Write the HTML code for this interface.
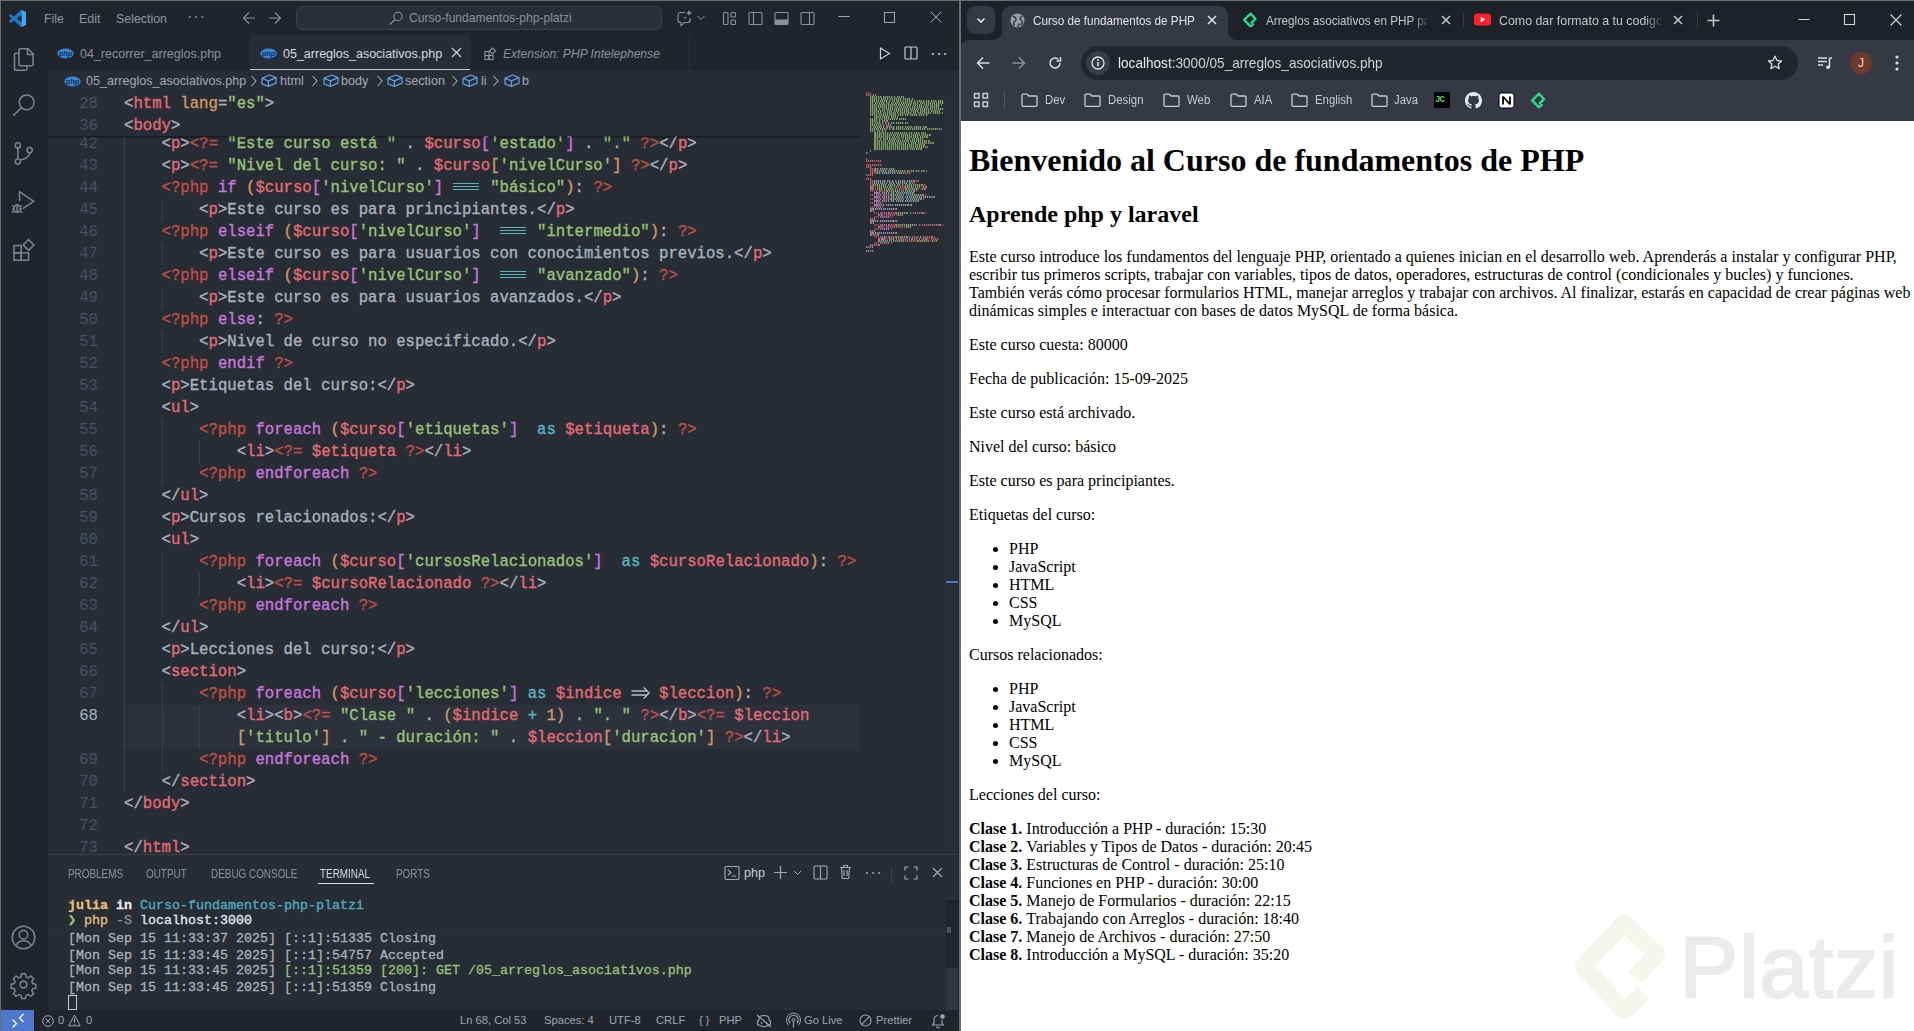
<!DOCTYPE html>
<html><head><meta charset="utf-8">
<style>
*{box-sizing:border-box;margin:0;padding:0}
html,body{width:1914px;height:1031px;overflow:hidden;background:#21252b;font-family:"Liberation Sans",sans-serif}
.a{position:absolute}
svg{position:absolute;overflow:visible}
/* VS Code */
#vs{position:absolute;left:0;top:0;width:960px;height:1031px;background:#21252b;overflow:hidden}
#title{position:absolute;left:0;top:0;width:958px;height:35px;background:#21252b;color:#8f959f;font-size:12.4px}
#title .m{position:absolute;top:11px;line-height:16px}
#act{position:absolute;left:0;top:35px;width:48px;height:975px;background:#21252b}
#tabs{position:absolute;left:48px;top:35px;width:910px;height:35px;background:#21252b;font-size:12.5px}
.tab{position:absolute;top:3px;height:35px;line-height:35px;color:#8b919c;white-space:nowrap}
#crumbs{position:absolute;left:48px;top:70px;width:910px;height:22px;background:#282c34;color:#a3a9b4;font-size:12.6px;white-space:nowrap}
#crumbs .c{position:absolute;top:4px;line-height:16px}
#ed{position:absolute;left:48px;top:92px;width:910px;height:762px;background:#282c34;overflow:hidden}
.cl{position:absolute;left:76px;height:22px;line-height:22px;padding-top:0.8px;white-space:pre;font-family:"Liberation Mono",monospace;font-size:15.65px;color:#abb2bf;-webkit-text-stroke:.35px}
.ln{position:absolute;left:0;width:50px;text-align:right;height:22px;line-height:22px;padding-top:0.8px;font-family:"Liberation Mono",monospace;font-size:15.65px;color:#495162}
.ln.act{color:#abb2bf}
#sticky{position:absolute;left:0;top:0;width:811px;height:44px;background:#282c34}
#sticky:after{content:"";position:absolute;left:0;top:44px;width:811px;height:3px;background:linear-gradient(rgba(0,0,0,.45),rgba(0,0,0,0))}
.ig{position:absolute;width:1px;background:#3b4048}
#panel{position:absolute;left:48px;top:854px;width:910px;height:156px;background:#282c34;border-top:1px solid #3a3f4b}
.pt{position:absolute;top:10px;font-size:12.4px;line-height:15px;color:#8b919c;letter-spacing:0;transform:scaleX(.8);transform-origin:0 0}
.tl{position:absolute;left:20px;white-space:pre;font-family:"Liberation Mono",monospace;font-size:13.33px;line-height:16px;color:#abb2bf;-webkit-text-stroke:.3px}
#status{position:absolute;left:0;top:1010px;width:958px;height:21px;background:#21252b;color:#9da5b4;font-size:11.2px;white-space:nowrap}
#status .s{position:absolute;top:4px;line-height:15px}
/* Chrome */
#cr{position:absolute;left:961px;top:0;width:953px;height:1031px;background:#1e2127;overflow:hidden}
#ctool{position:absolute;left:0;top:40px;width:953px;height:81px;background:#363943;border-top-left-radius:8px}
.ctab{position:absolute;top:0;height:40px;font-size:12.5px;color:#c4c6ca;white-space:nowrap}
.bm{position:absolute;top:92px;font-size:12.5px;line-height:16px;color:#c8cace;transform:scaleX(.912);transform-origin:0 50%}
#page{position:absolute;left:0;top:121px;width:959px;height:910px;background:#fff;overflow:hidden;font-family:"Liberation Serif",serif;color:#000;font-size:16px;line-height:normal}
.mm{position:absolute;height:2px;opacity:.75}
.mm.r{background:repeating-linear-gradient(90deg,#e06c75 0 1px,transparent 1px 2px),linear-gradient(#e06c7555,#e06c7555)}
.mm.g{background:repeating-linear-gradient(90deg,#98c379 0 1px,transparent 1px 2px),linear-gradient(#98c37955,#98c37955)}
.mm.w{background:repeating-linear-gradient(90deg,#abb2bf 0 1px,transparent 1px 2px),linear-gradient(#abb2bf55,#abb2bf55)}
.mm.p{background:repeating-linear-gradient(90deg,#c678dd 0 1px,transparent 1px 2px),linear-gradient(#c678dd55,#c678dd55)}
.mm.o{background:repeating-linear-gradient(90deg,#d19a66 0 1px,transparent 1px 2px),linear-gradient(#d19a6655,#d19a6655)}
.mm.c{background:repeating-linear-gradient(90deg,#56b6c2 0 1px,transparent 1px 2px),linear-gradient(#56b6c255,#56b6c255)}
.mm.d{background:repeating-linear-gradient(90deg,#be5046 0 1px,transparent 1px 2px),linear-gradient(#be504655,#be504655)}
#page .pg{margin:8px}
#page h1{font-size:2em;margin:.67em 0;font-weight:bold}
#page h2{font-size:1.5em;margin:.83em 0;font-weight:bold}
#page p{margin:1em 0}
#page ul{margin:1em 0;padding-left:40px;list-style:disc}
#page section li{list-style:none}
</style></head><body>
<div id="vs">
  <div id="title">
<svg style="left:9px;top:10px" width="17" height="17" viewBox="0 0 100 100" ><path fill="#1f79c2" d="M96.5 10.8 75.9.9a6.2 6.2 0 0 0-7.1 1.2L29.4 38 12.2 25a4.2 4.2 0 0 0-5.3.2L1.4 30.2a4.2 4.2 0 0 0 0 6.2L16.3 50 1.4 63.6a4.2 4.2 0 0 0 0 6.2l5.5 5a4.2 4.2 0 0 0 5.3.2l17.2-13 39.4 35.9a6.2 6.2 0 0 0 7.1 1.2l20.6-9.9a6.2 6.2 0 0 0 3.5-5.6V16.4a6.2 6.2 0 0 0-3.5-5.6zM75 72.7 45.1 50 75 27.3z"/><path fill="#3aa8f0" d="M75 0.5 96.5 10.8a6.2 6.2 0 0 1 3.5 5.6v67.2a6.2 6.2 0 0 1-3.5 5.6L75 99.5z"/></svg>
<div class="m" style="left:44px;top:11px;">File</div>
<div class="m" style="left:79px;top:11px;">Edit</div>
<div class="m" style="left:116px;top:11px;">Selection</div>
<div class="m" style="left:187px;top:9px;font-size:16px;letter-spacing:1px">···</div>
<svg style="left:242px;top:11px" width="14" height="14" viewBox="0 0 14 14" ><path d="M13 7H1.5M7 1.5 1.5 7 7 12.5" fill="none" stroke="#8b919c" stroke-width="1.1"/></svg>
<svg style="left:268px;top:11px" width="14" height="14" viewBox="0 0 14 14" ><path d="M1 7h11.5M7 1.5 12.5 7 7 12.5" fill="none" stroke="#8b919c" stroke-width="1.1"/></svg>
<div class="a" style="left:296px;top:6px;width:366px;height:24px;border-radius:6px;background:#2a2e35;border:1px solid #3a3f48"></div>
<svg style="left:389px;top:11px" width="14" height="14" viewBox="0 0 14 14" ><circle cx="9" cy="5.5" r="4.2" fill="none" stroke="#8b919c" stroke-width="1.1"/><path d="M6 8.5 1 13.5" stroke="#8b919c" stroke-width="1.2"/></svg>
<div class="a" style="left:409px;top:10px;font-size:12.1px;line-height:16px;color:#8b919c">Curso-fundamentos-php-platzi</div>
<svg style="left:676px;top:9px" width="18" height="18" viewBox="0 0 18 18" ><path d="M9 3.5H4a2 2 0 0 0-2 2v6a2 2 0 0 0 2 2h1v3l3.5-3H12a2 2 0 0 0 2-2V9" fill="none" stroke="#8b919c" stroke-width="1.1"/><path d="M13 1l.9 2.1L16 4l-2.1.9L13 7l-.9-2.1L10 4l2.1-.9z" fill="#8b919c"/><path d="M9 7l.5 1.2 1.2.5-1.2.5L9 10.4l-.5-1.2-1.2-.5 1.2-.5z" fill="#8b919c"/></svg>
<svg style="left:696px;top:14px" width="10" height="8" viewBox="0 0 10 8" ><path d="M1.5 2 5 5.5 8.5 2" fill="none" stroke="#8b919c" stroke-width="1"/></svg>
<svg style="left:722px;top:11px" width="15" height="15" viewBox="0 0 15 15" ><rect x="1.5" y="1.5" width="4.5" height="12" rx="1" fill="none" stroke="#8b919c" stroke-width="1.1"/><rect x="9" y="1.5" width="4.5" height="4.5" rx="1" fill="none" stroke="#8b919c" stroke-width="1.1"/><rect x="9" y="9" width="4.5" height="4.5" rx="1" fill="none" stroke="#8b919c" stroke-width="1.1"/></svg>
<svg style="left:748px;top:11px" width="15" height="15" viewBox="0 0 15 15" ><rect x="1" y="1.5" width="13" height="12" rx="1" fill="none" stroke="#8b919c" stroke-width="1.1"/><path d="M5.5 1.5v12" stroke="#8b919c" stroke-width="1.1"/></svg>
<svg style="left:774px;top:11px" width="15" height="15" viewBox="0 0 15 15" ><rect x="1" y="1.5" width="13" height="12" rx="1" fill="none" stroke="#8b919c" stroke-width="1.1"/><rect x="1" y="8.5" width="13" height="5" fill="#8b919c"/></svg>
<svg style="left:800px;top:11px" width="15" height="15" viewBox="0 0 15 15" ><rect x="1" y="1.5" width="13" height="12" rx="1" fill="none" stroke="#8b919c" stroke-width="1.1"/><path d="M9.5 1.5v12" stroke="#8b919c" stroke-width="1.1"/></svg>
<svg style="left:838px;top:10px" width="12" height="12" viewBox="0 0 12 12" ><path d="M0.5 6.5h11" stroke="#a0a4ab" stroke-width="1"/></svg>
<svg style="left:884px;top:12px" width="12" height="12" viewBox="0 0 12 12" ><rect x="0.5" y="0.5" width="10" height="10" fill="none" stroke="#a0a4ab" stroke-width="1"/></svg>
<svg style="left:930px;top:11px" width="12" height="12" viewBox="0 0 12 12" ><path d="M0.5 0.5 11.5 11.5M11.5 0.5 0.5 11.5" stroke="#a0a4ab" stroke-width="1"/></svg>
  </div>
  <div id="act">
<svg style="left:10px;top:11px" width="27" height="27" viewBox="0 0 24 24" ><path d="M9 2.5h7l4.5 4.5v9.5a1 1 0 0 1-1 1H9a1 1 0 0 1-1-1v-13a1 1 0 0 1 1-1z" fill="none" stroke="#7d828c" stroke-width="1.35"/><path d="M15.5 2.5v5h5" fill="none" stroke="#7d828c" stroke-width="1.35"/><path d="M8 6.5H5a1 1 0 0 0-1 1v13a1 1 0 0 0 1 1h9a1 1 0 0 0 1-1v-3" fill="none" stroke="#7d828c" stroke-width="1.35"/></svg>
<svg style="left:10px;top:57px" width="27" height="27" viewBox="0 0 24 24" ><circle cx="14.8" cy="9.2" r="6.6" fill="none" stroke="#7d828c" stroke-width="1.35"/><path d="M10.2 13.8 3 21" fill="none" stroke="#7d828c" stroke-width="1.35"/></svg>
<svg style="left:10px;top:105px" width="27" height="27" viewBox="0 0 24 24" ><circle cx="7" cy="4.8" r="2.3" fill="none" stroke="#7d828c" stroke-width="1.35"/><circle cx="7" cy="19.2" r="2.3" fill="none" stroke="#7d828c" stroke-width="1.35"/><circle cx="17.5" cy="9" r="2.3" fill="none" stroke="#7d828c" stroke-width="1.35"/><path d="M7 7.1v9.8M17.5 11.3c0 4-4 5.5-8.3 6.5" fill="none" stroke="#7d828c" stroke-width="1.35"/></svg>
<svg style="left:10px;top:153px" width="27" height="27" viewBox="0 0 24 24" ><path d="M8.5 11.5V3.2L21 11.8 11.5 18.3" fill="none" stroke="#7d828c" stroke-width="1.35"/><ellipse cx="6.3" cy="18.3" rx="2.8" ry="3.3" fill="none" stroke="#7d828c" stroke-width="1.35"/><path d="M1.8 15.6l1.8 1M1.8 18.6h1.7M1.8 21.8l1.8-1.3M10.8 15.6l-1.8 1M10.8 18.6H9.1M10.8 21.8l-1.8-1.3M6.3 15v6.6" fill="none" stroke="#7d828c" stroke-width="1.35"/></svg>
<svg style="left:10px;top:201px" width="27" height="27" viewBox="0 0 24 24" ><rect x="3.5" y="8.5" width="6.5" height="6.5" fill="none" stroke="#7d828c" stroke-width="1.35"/><rect x="3.5" y="15" width="6.5" height="6.5" fill="none" stroke="#7d828c" stroke-width="1.35"/><rect x="10" y="15" width="6.5" height="6.5" fill="none" stroke="#7d828c" stroke-width="1.35"/><path d="M16.5 3.2 21.3 8l-4.8 4.8L11.7 8z" fill="none" stroke="#7d828c" stroke-width="1.35"/></svg>
<svg style="left:10px;top:889px" width="27" height="27" viewBox="0 0 24 24" ><circle cx="12" cy="12" r="10" fill="none" stroke="#7d828c" stroke-width="1.35"/><circle cx="12" cy="9.5" r="3.8" fill="none" stroke="#7d828c" stroke-width="1.35"/><path d="M5.2 19.2c1.5-3 3.8-4.3 6.8-4.3s5.3 1.3 6.8 4.3" fill="none" stroke="#7d828c" stroke-width="1.35"/></svg>
<svg style="left:10px;top:936px" width="27" height="27" viewBox="0 0 24 24" ><path d="M10.3 2.5h3.4l.6 2.8 1.9.8 2.4-1.6 2.4 2.4-1.6 2.4.8 1.9 2.8.6v3.4l-2.8.6-.8 1.9 1.6 2.4-2.4 2.4-2.4-1.6-1.9.8-.6 2.8h-3.4l-.6-2.8-1.9-.8-2.4 1.6-2.4-2.4 1.6-2.4-.8-1.9-2.8-.6v-3.4l2.8-.6.8-1.9-1.6-2.4 2.4-2.4 2.4 1.6 1.9-.8z" fill="none" stroke="#7d828c" stroke-width="1.35"/><circle cx="12" cy="12" r="3" fill="none" stroke="#7d828c" stroke-width="1.35"/></svg>
  </div>
  <div id="tabs">
<svg style="left:9px;top:13px" width="17" height="11" viewBox="0 0 17 11" ><ellipse cx="8.5" cy="5.5" rx="8.2" ry="5" fill="#3a86d6"/><text x="8.5" y="8" font-family="Liberation Sans" font-style="italic" font-weight="bold" font-size="7.5" text-anchor="middle" fill="#12325a">php</text></svg>
<div class="tab" style="left:32px;top:1.5px;">04_recorrer_arreglos.php</div>
<div class="a" style="left:202px;top:0;width:220px;height:35px;background:#282c34;border-bottom:1px solid #c8ccd4"></div>
<svg style="left:212px;top:13px" width="17" height="11" viewBox="0 0 17 11" ><ellipse cx="8.5" cy="5.5" rx="8.2" ry="5" fill="#3a86d6"/><text x="8.5" y="8" font-family="Liberation Sans" font-style="italic" font-weight="bold" font-size="7.5" text-anchor="middle" fill="#12325a">php</text></svg>
<div class="tab" style="left:235px;top:1.5px;color:#d7dae0">05_arreglos_asociativos.php</div>
<svg style="left:403px;top:12px" width="11" height="11" viewBox="0 0 11 11" ><path d="M1 1 10 10M10 1 1 10" stroke="#c8ccd4" stroke-width="1.3"/></svg>
<svg style="left:436px;top:12px" width="13" height="13" viewBox="0 0 13 13" ><rect x="1" y="4.5" width="4" height="4" fill="none" stroke="#8b919c" stroke-width="1.1"/><rect x="1" y="8.5" width="4" height="4" fill="none" stroke="#8b919c" stroke-width="1.1"/><rect x="5" y="8.5" width="4" height="4" fill="none" stroke="#8b919c" stroke-width="1.1"/><path d="M8.5 1 11.5 4 8.5 7 5.5 4z" fill="none" stroke="#8b919c" stroke-width="1.1"/></svg>
<div class="tab" style="left:455px;top:1.5px;font-style:italic;font-size:12.1px">Extension: PHP Intelephense</div>
<div class="a" style="left:641px;top:0;width:1px;height:35px;background:#2c3038"></div>
<svg style="left:831px;top:12px" width="12" height="13" viewBox="0 0 12 13" ><path d="M1.5 1 10.5 6.5 1.5 12z" fill="none" stroke="#c8ccd4" stroke-width="1.2"/></svg>
<svg style="left:856px;top:11px" width="14" height="14" viewBox="0 0 14 14" ><rect x="1" y="1" width="12" height="12" rx="1" fill="none" stroke="#c8ccd4" stroke-width="1.2"/><path d="M7 1v12" stroke="#c8ccd4" stroke-width="1.2"/></svg>
<div class="a" style="left:882px;top:11px;font-size:17px;line-height:16px;color:#c8ccd4;letter-spacing:0.5px">···</div>
  </div>
  <div id="crumbs">
<svg style="left:16px;top:6px" width="17" height="11" viewBox="0 0 17 11" ><ellipse cx="8.5" cy="5.5" rx="8.2" ry="5" fill="#3a86d6"/><text x="8.5" y="8" font-family="Liberation Sans" font-style="italic" font-weight="bold" font-size="7.5" text-anchor="middle" fill="#12325a">php</text></svg>
<div class="c" style="left:38px;top:3px;">05_arreglos_asociativos.php</div>
<svg style="left:202px;top:5px" width="8" height="12" viewBox="0 0 8 12" ><path d="M1.5 1 6 6 1.5 11" fill="none" stroke="#a3a9b4" stroke-width="1.1"/></svg>
<svg style="left:212.5px;top:4px" width="16" height="13" viewBox="0 0 16 13" ><path d="M1 4.3 8.6 1 15 3.6v5.6L7.4 12.4 1 9.8z M1 4.3 7.4 6.9 15 3.6 M7.4 6.9v5.5" fill="none" stroke="#5d9de3" stroke-width="1.3" stroke-linejoin="round"/></svg>
<div class="c" style="left:232px;top:3px;">html</div>
<svg style="left:263px;top:5px" width="8" height="12" viewBox="0 0 8 12" ><path d="M1.5 1 6 6 1.5 11" fill="none" stroke="#a3a9b4" stroke-width="1.1"/></svg>
<svg style="left:274.5px;top:4px" width="16" height="13" viewBox="0 0 16 13" ><path d="M1 4.3 8.6 1 15 3.6v5.6L7.4 12.4 1 9.8z M1 4.3 7.4 6.9 15 3.6 M7.4 6.9v5.5" fill="none" stroke="#5d9de3" stroke-width="1.3" stroke-linejoin="round"/></svg>
<div class="c" style="left:293px;top:3px;">body</div>
<svg style="left:328px;top:5px" width="8" height="12" viewBox="0 0 8 12" ><path d="M1.5 1 6 6 1.5 11" fill="none" stroke="#a3a9b4" stroke-width="1.1"/></svg>
<svg style="left:338.5px;top:4px" width="16" height="13" viewBox="0 0 16 13" ><path d="M1 4.3 8.6 1 15 3.6v5.6L7.4 12.4 1 9.8z M1 4.3 7.4 6.9 15 3.6 M7.4 6.9v5.5" fill="none" stroke="#5d9de3" stroke-width="1.3" stroke-linejoin="round"/></svg>
<div class="c" style="left:357px;top:3px;">section</div>
<svg style="left:403px;top:5px" width="8" height="12" viewBox="0 0 8 12" ><path d="M1.5 1 6 6 1.5 11" fill="none" stroke="#a3a9b4" stroke-width="1.1"/></svg>
<svg style="left:413.5px;top:4px" width="16" height="13" viewBox="0 0 16 13" ><path d="M1 4.3 8.6 1 15 3.6v5.6L7.4 12.4 1 9.8z M1 4.3 7.4 6.9 15 3.6 M7.4 6.9v5.5" fill="none" stroke="#5d9de3" stroke-width="1.3" stroke-linejoin="round"/></svg>
<div class="c" style="left:433px;top:3px;">li</div>
<svg style="left:444px;top:5px" width="8" height="12" viewBox="0 0 8 12" ><path d="M1.5 1 6 6 1.5 11" fill="none" stroke="#a3a9b4" stroke-width="1.1"/></svg>
<svg style="left:455.5px;top:4px" width="16" height="13" viewBox="0 0 16 13" ><path d="M1 4.3 8.6 1 15 3.6v5.6L7.4 12.4 1 9.8z M1 4.3 7.4 6.9 15 3.6 M7.4 6.9v5.5" fill="none" stroke="#5d9de3" stroke-width="1.3" stroke-linejoin="round"/></svg>
<div class="c" style="left:474px;top:3px;">b</div>
  </div>
  <div id="ed">
<div class="a" style="left:75px;top:612.7px;width:735px;height:44px;background:#2c313c"></div>
<div class="ig" style="left:76.0px;top:40.7px;height:660.0px"></div>
<div class="ig" style="left:113.6px;top:106.7px;height:22.0px"></div>
<div class="ig" style="left:113.6px;top:150.7px;height:22.0px"></div>
<div class="ig" style="left:113.6px;top:194.7px;height:22.0px"></div>
<div class="ig" style="left:113.6px;top:238.7px;height:22.0px"></div>
<div class="ig" style="left:113.6px;top:326.7px;height:66.0px"></div>
<div class="ig" style="left:151.1px;top:348.7px;height:22.0px"></div>
<div class="ig" style="left:113.6px;top:458.7px;height:66.0px"></div>
<div class="ig" style="left:151.1px;top:480.7px;height:22.0px"></div>
<div class="ig" style="left:113.6px;top:590.7px;height:88.0px"></div>
<div class="ig" style="left:151.1px;top:612.7px;height:44.0px"></div>
<div class="ln" style="top:40.7px">42</div>
<div class="ln" style="top:62.7px">43</div>
<div class="ln" style="top:84.7px">44</div>
<div class="ln" style="top:106.7px">45</div>
<div class="ln" style="top:128.7px">46</div>
<div class="ln" style="top:150.7px">47</div>
<div class="ln" style="top:172.7px">48</div>
<div class="ln" style="top:194.7px">49</div>
<div class="ln" style="top:216.7px">50</div>
<div class="ln" style="top:238.7px">51</div>
<div class="ln" style="top:260.7px">52</div>
<div class="ln" style="top:282.7px">53</div>
<div class="ln" style="top:304.7px">54</div>
<div class="ln" style="top:326.7px">55</div>
<div class="ln" style="top:348.7px">56</div>
<div class="ln" style="top:370.7px">57</div>
<div class="ln" style="top:392.7px">58</div>
<div class="ln" style="top:414.7px">59</div>
<div class="ln" style="top:436.7px">60</div>
<div class="ln" style="top:458.7px">61</div>
<div class="ln" style="top:480.7px">62</div>
<div class="ln" style="top:502.7px">63</div>
<div class="ln" style="top:524.7px">64</div>
<div class="ln" style="top:546.7px">65</div>
<div class="ln" style="top:568.7px">66</div>
<div class="ln" style="top:590.7px">67</div>
<div class="ln act" style="top:612.7px">68</div>
<div class="ln" style="top:656.7px">69</div>
<div class="ln" style="top:678.7px">70</div>
<div class="ln" style="top:700.7px">71</div>
<div class="ln" style="top:722.7px">72</div>
<div class="ln" style="top:744.7px">73</div>
<div class="cl" style="top:40.7px">    <span style="color:#abb2bf">&lt;</span><span style="color:#e06c75">p</span><span style="color:#abb2bf">&gt;</span><span style="color:#be5046">&lt;?=</span> <span style="color:#98c379">&quot;Este curso está &quot;</span><span style="color:#abb2bf"> . </span><span style="color:#e06c75">$curso</span><span style="color:#c678dd">[</span><span style="color:#98c379">&#x27;estado&#x27;</span><span style="color:#c678dd">]</span><span style="color:#abb2bf"> . </span><span style="color:#98c379">&quot;.&quot;</span> <span style="color:#be5046">?&gt;</span><span style="color:#abb2bf">&lt;/</span><span style="color:#e06c75">p</span><span style="color:#abb2bf">&gt;</span></div>
<div class="cl" style="top:62.7px">    <span style="color:#abb2bf">&lt;</span><span style="color:#e06c75">p</span><span style="color:#abb2bf">&gt;</span><span style="color:#be5046">&lt;?=</span> <span style="color:#98c379">&quot;Nivel del curso: &quot;</span><span style="color:#abb2bf"> . </span><span style="color:#e06c75">$curso</span><span style="color:#d19a66">[</span><span style="color:#98c379">&#x27;nivelCurso&#x27;</span><span style="color:#d19a66">]</span> <span style="color:#be5046">?&gt;</span><span style="color:#abb2bf">&lt;/</span><span style="color:#e06c75">p</span><span style="color:#abb2bf">&gt;</span></div>
<div class="cl" style="top:84.7px">    <span style="color:#be5046">&lt;?php</span> <span style="color:#c678dd">if</span> <span style="color:#d19a66">(</span><span style="color:#e06c75">$curso</span><span style="color:#c678dd">[</span><span style="color:#98c379">&#x27;nivelCurso&#x27;</span><span style="color:#c678dd">]</span> <span style="display:inline-block;vertical-align:top;width:28.17px;height:22px;background:linear-gradient(#56b6c2,#56b6c2) 0.5px 5.3px/26px 1.4px no-repeat,linear-gradient(#56b6c2,#56b6c2) 0.5px 8.6px/26px 1.4px no-repeat,linear-gradient(#56b6c2,#56b6c2) 0.5px 11.6px/26px 1.4px no-repeat"></span> <span style="color:#98c379">&quot;básico&quot;</span><span style="color:#d19a66">)</span><span style="color:#abb2bf">:</span> <span style="color:#be5046">?&gt;</span></div>
<div class="cl" style="top:106.7px">        <span style="color:#abb2bf">&lt;</span><span style="color:#e06c75">p</span><span style="color:#abb2bf">&gt;</span><span style="color:#abb2bf">Este curso es para principiantes.</span><span style="color:#abb2bf">&lt;/</span><span style="color:#e06c75">p</span><span style="color:#abb2bf">&gt;</span></div>
<div class="cl" style="top:128.7px">    <span style="color:#be5046">&lt;?php</span> <span style="color:#c678dd">elseif</span> <span style="color:#d19a66">(</span><span style="color:#e06c75">$curso</span><span style="color:#c678dd">[</span><span style="color:#98c379">&#x27;nivelCurso&#x27;</span><span style="color:#c678dd">]</span>  <span style="display:inline-block;vertical-align:top;width:28.17px;height:22px;background:linear-gradient(#56b6c2,#56b6c2) 0.5px 5.3px/26px 1.4px no-repeat,linear-gradient(#56b6c2,#56b6c2) 0.5px 8.6px/26px 1.4px no-repeat,linear-gradient(#56b6c2,#56b6c2) 0.5px 11.6px/26px 1.4px no-repeat"></span> <span style="color:#98c379">&quot;intermedio&quot;</span><span style="color:#d19a66">)</span><span style="color:#abb2bf">:</span> <span style="color:#be5046">?&gt;</span></div>
<div class="cl" style="top:150.7px">        <span style="color:#abb2bf">&lt;</span><span style="color:#e06c75">p</span><span style="color:#abb2bf">&gt;</span><span style="color:#abb2bf">Este curso es para usuarios con conocimientos previos.</span><span style="color:#abb2bf">&lt;/</span><span style="color:#e06c75">p</span><span style="color:#abb2bf">&gt;</span></div>
<div class="cl" style="top:172.7px">    <span style="color:#be5046">&lt;?php</span> <span style="color:#c678dd">elseif</span> <span style="color:#d19a66">(</span><span style="color:#e06c75">$curso</span><span style="color:#c678dd">[</span><span style="color:#98c379">&#x27;nivelCurso&#x27;</span><span style="color:#c678dd">]</span>  <span style="display:inline-block;vertical-align:top;width:28.17px;height:22px;background:linear-gradient(#56b6c2,#56b6c2) 0.5px 5.3px/26px 1.4px no-repeat,linear-gradient(#56b6c2,#56b6c2) 0.5px 8.6px/26px 1.4px no-repeat,linear-gradient(#56b6c2,#56b6c2) 0.5px 11.6px/26px 1.4px no-repeat"></span> <span style="color:#98c379">&quot;avanzado&quot;</span><span style="color:#d19a66">)</span><span style="color:#abb2bf">:</span> <span style="color:#be5046">?&gt;</span></div>
<div class="cl" style="top:194.7px">        <span style="color:#abb2bf">&lt;</span><span style="color:#e06c75">p</span><span style="color:#abb2bf">&gt;</span><span style="color:#abb2bf">Este curso es para usuarios avanzados.</span><span style="color:#abb2bf">&lt;/</span><span style="color:#e06c75">p</span><span style="color:#abb2bf">&gt;</span></div>
<div class="cl" style="top:216.7px">    <span style="color:#be5046">&lt;?php</span> <span style="color:#c678dd">else</span><span style="color:#abb2bf">:</span> <span style="color:#be5046">?&gt;</span></div>
<div class="cl" style="top:238.7px">        <span style="color:#abb2bf">&lt;</span><span style="color:#e06c75">p</span><span style="color:#abb2bf">&gt;</span><span style="color:#abb2bf">Nivel de curso no especificado.</span><span style="color:#abb2bf">&lt;/</span><span style="color:#e06c75">p</span><span style="color:#abb2bf">&gt;</span></div>
<div class="cl" style="top:260.7px">    <span style="color:#be5046">&lt;?php</span> <span style="color:#c678dd">endif</span> <span style="color:#be5046">?&gt;</span></div>
<div class="cl" style="top:282.7px">    <span style="color:#abb2bf">&lt;</span><span style="color:#e06c75">p</span><span style="color:#abb2bf">&gt;</span><span style="color:#abb2bf">Etiquetas del curso:</span><span style="color:#abb2bf">&lt;/</span><span style="color:#e06c75">p</span><span style="color:#abb2bf">&gt;</span></div>
<div class="cl" style="top:304.7px">    <span style="color:#abb2bf">&lt;</span><span style="color:#e06c75">ul</span><span style="color:#abb2bf">&gt;</span></div>
<div class="cl" style="top:326.7px">        <span style="color:#be5046">&lt;?php</span> <span style="color:#c678dd">foreach</span> <span style="color:#d19a66">(</span><span style="color:#e06c75">$curso</span><span style="color:#c678dd">[</span><span style="color:#98c379">&#x27;etiquetas&#x27;</span><span style="color:#c678dd">]</span>  <span style="color:#56b6c2">as</span> <span style="color:#e06c75">$etiqueta</span><span style="color:#d19a66">)</span><span style="color:#abb2bf">:</span> <span style="color:#be5046">?&gt;</span></div>
<div class="cl" style="top:348.7px">            <span style="color:#abb2bf">&lt;</span><span style="color:#e06c75">li</span><span style="color:#abb2bf">&gt;</span><span style="color:#be5046">&lt;?=</span> <span style="color:#e06c75">$etiqueta</span> <span style="color:#be5046">?&gt;</span><span style="color:#abb2bf">&lt;/</span><span style="color:#e06c75">li</span><span style="color:#abb2bf">&gt;</span></div>
<div class="cl" style="top:370.7px">        <span style="color:#be5046">&lt;?php</span> <span style="color:#c678dd">endforeach</span> <span style="color:#be5046">?&gt;</span></div>
<div class="cl" style="top:392.7px">    <span style="color:#abb2bf">&lt;/</span><span style="color:#e06c75">ul</span><span style="color:#abb2bf">&gt;</span></div>
<div class="cl" style="top:414.7px">    <span style="color:#abb2bf">&lt;</span><span style="color:#e06c75">p</span><span style="color:#abb2bf">&gt;</span><span style="color:#abb2bf">Cursos relacionados:</span><span style="color:#abb2bf">&lt;/</span><span style="color:#e06c75">p</span><span style="color:#abb2bf">&gt;</span></div>
<div class="cl" style="top:436.7px">    <span style="color:#abb2bf">&lt;</span><span style="color:#e06c75">ul</span><span style="color:#abb2bf">&gt;</span></div>
<div class="cl" style="top:458.7px">        <span style="color:#be5046">&lt;?php</span> <span style="color:#c678dd">foreach</span> <span style="color:#d19a66">(</span><span style="color:#e06c75">$curso</span><span style="color:#c678dd">[</span><span style="color:#98c379">&#x27;cursosRelacionados&#x27;</span><span style="color:#c678dd">]</span>  <span style="color:#56b6c2">as</span> <span style="color:#e06c75">$cursoRelacionado</span><span style="color:#d19a66">)</span><span style="color:#abb2bf">:</span> <span style="color:#be5046">?&gt;</span></div>
<div class="cl" style="top:480.7px">            <span style="color:#abb2bf">&lt;</span><span style="color:#e06c75">li</span><span style="color:#abb2bf">&gt;</span><span style="color:#be5046">&lt;?=</span> <span style="color:#e06c75">$cursoRelacionado</span> <span style="color:#be5046">?&gt;</span><span style="color:#abb2bf">&lt;/</span><span style="color:#e06c75">li</span><span style="color:#abb2bf">&gt;</span></div>
<div class="cl" style="top:502.7px">        <span style="color:#be5046">&lt;?php</span> <span style="color:#c678dd">endforeach</span> <span style="color:#be5046">?&gt;</span></div>
<div class="cl" style="top:524.7px">    <span style="color:#abb2bf">&lt;/</span><span style="color:#e06c75">ul</span><span style="color:#abb2bf">&gt;</span></div>
<div class="cl" style="top:546.7px">    <span style="color:#abb2bf">&lt;</span><span style="color:#e06c75">p</span><span style="color:#abb2bf">&gt;</span><span style="color:#abb2bf">Lecciones del curso:</span><span style="color:#abb2bf">&lt;/</span><span style="color:#e06c75">p</span><span style="color:#abb2bf">&gt;</span></div>
<div class="cl" style="top:568.7px">    <span style="color:#abb2bf">&lt;</span><span style="color:#e06c75">section</span><span style="color:#abb2bf">&gt;</span></div>
<div class="cl" style="top:590.7px">        <span style="color:#be5046">&lt;?php</span> <span style="color:#c678dd">foreach</span> <span style="color:#d19a66">(</span><span style="color:#e06c75">$curso</span><span style="color:#c678dd">[</span><span style="color:#98c379">&#x27;lecciones&#x27;</span><span style="color:#c678dd">]</span> <span style="color:#56b6c2">as</span> <span style="color:#e06c75">$indice</span> <span style="display:inline-block;position:relative;vertical-align:top;width:18.78px;height:22px"><svg style="left:0;top:0" width="19" height="22"><path d="M0.5 8h15M0.5 12h15M12.8 4.4 18 10 12.8 15.6" fill="none" stroke="#b7bdc8" stroke-width="1.4"/></svg></span> <span style="color:#e06c75">$leccion</span><span style="color:#d19a66">)</span><span style="color:#abb2bf">:</span> <span style="color:#be5046">?&gt;</span></div>
<div class="cl" style="top:612.7px">            <span style="color:#abb2bf">&lt;</span><span style="color:#e06c75">li</span><span style="color:#abb2bf">&gt;</span><span style="color:#abb2bf">&lt;</span><span style="color:#e06c75">b</span><span style="color:#abb2bf">&gt;</span><span style="color:#be5046">&lt;?=</span> <span style="color:#98c379">&quot;Clase &quot;</span><span style="color:#abb2bf"> . </span><span style="color:#d19a66">(</span><span style="color:#e06c75">$indice</span> <span style="color:#56b6c2">+</span> <span style="color:#d19a66">1</span><span style="color:#d19a66">)</span><span style="color:#abb2bf"> . </span><span style="color:#98c379">&quot;. &quot;</span> <span style="color:#be5046">?&gt;</span><span style="color:#abb2bf">&lt;/</span><span style="color:#e06c75">b</span><span style="color:#abb2bf">&gt;</span><span style="color:#be5046">&lt;?=</span> <span style="color:#e06c75">$leccion</span></div>
<div class="cl" style="top:634.7px">            <span style="color:#d19a66">[</span><span style="color:#98c379">&#x27;titulo&#x27;</span><span style="color:#d19a66">]</span><span style="color:#abb2bf"> . </span><span style="color:#98c379">&quot; - duración: &quot;</span><span style="color:#abb2bf"> . </span><span style="color:#e06c75">$leccion</span><span style="color:#d19a66">[</span><span style="color:#98c379">&#x27;duracion&#x27;</span><span style="color:#d19a66">]</span> <span style="color:#be5046">?&gt;</span><span style="color:#abb2bf">&lt;/</span><span style="color:#e06c75">li</span><span style="color:#abb2bf">&gt;</span></div>
<div class="cl" style="top:656.7px">        <span style="color:#be5046">&lt;?php</span> <span style="color:#c678dd">endforeach</span> <span style="color:#be5046">?&gt;</span></div>
<div class="cl" style="top:678.7px">    <span style="color:#abb2bf">&lt;/</span><span style="color:#e06c75">section</span><span style="color:#abb2bf">&gt;</span></div>
<div class="cl" style="top:700.7px"><span style="color:#abb2bf">&lt;/</span><span style="color:#e06c75">body</span><span style="color:#abb2bf">&gt;</span></div>
<div class="cl" style="top:722.7px"></div>
<div class="cl" style="top:744.7px"><span style="color:#abb2bf">&lt;/</span><span style="color:#e06c75">html</span><span style="color:#abb2bf">&gt;</span></div>
    <div id="sticky">
<div class="cl" style="top:0px"><span style="color:#abb2bf">&lt;</span><span style="color:#e06c75">html</span> <span style="color:#d19a66">lang</span><span style="color:#abb2bf">=</span><span style="color:#98c379">&quot;es&quot;</span><span style="color:#abb2bf">&gt;</span></div>
<div class="ln" style="top:0px">28</div>
<div class="cl" style="top:22px"><span style="color:#abb2bf">&lt;</span><span style="color:#e06c75">body</span><span style="color:#abb2bf">&gt;</span></div>
<div class="ln" style="top:22px">36</div>
    </div>
<i class="mm d" style="left:818px;top:0px;width:5px"></i>
<i class="mm r" style="left:818px;top:2px;width:6px"></i>
<i class="mm w" style="left:825px;top:2px;width:1px"></i>
<i class="mm w" style="left:827px;top:2px;width:1px"></i>
<i class="mm g" style="left:822px;top:4px;width:7px"></i>
<i class="mm g" style="left:830px;top:4px;width:4px"></i>
<i class="mm g" style="left:835px;top:4px;width:7px"></i>
<i class="mm w" style="left:843px;top:4px;width:2px"></i>
<i class="mm g" style="left:846px;top:4px;width:2px"></i>
<i class="mm g" style="left:849px;top:4px;width:3px"></i>
<i class="mm g" style="left:853px;top:4px;width:3px"></i>
<i class="mm g" style="left:822px;top:6px;width:7px"></i>
<i class="mm g" style="left:830px;top:6px;width:2px"></i>
<i class="mm g" style="left:833px;top:6px;width:5px"></i>
<i class="mm g" style="left:839px;top:6px;width:2px"></i>
<i class="mm g" style="left:842px;top:6px;width:3px"></i>
<i class="mm g" style="left:846px;top:6px;width:8px"></i>
<i class="mm g" style="left:855px;top:6px;width:8px"></i>
<i class="mm g" style="left:864px;top:6px;width:2px"></i>
<i class="mm g" style="left:822px;top:8px;width:5px"></i>
<i class="mm g" style="left:828px;top:8px;width:3px"></i>
<i class="mm g" style="left:832px;top:8px;width:8px"></i>
<i class="mm g" style="left:841px;top:8px;width:2px"></i>
<i class="mm g" style="left:844px;top:8px;width:3px"></i>
<i class="mm g" style="left:848px;top:8px;width:5px"></i>
<i class="mm g" style="left:854px;top:8px;width:2px"></i>
<i class="mm g" style="left:857px;top:8px;width:8px"></i>
<i class="mm g" style="left:866px;top:8px;width:2px"></i>
<i class="mm g" style="left:869px;top:8px;width:5px"></i>
<i class="mm g" style="left:875px;top:8px;width:2px"></i>
<i class="mm g" style="left:878px;top:8px;width:4px"></i>
<i class="mm g" style="left:883px;top:8px;width:6px"></i>
<i class="mm g" style="left:890px;top:8px;width:5px"></i>
<i class="mm g" style="left:822px;top:10px;width:4px"></i>
<i class="mm g" style="left:827px;top:10px;width:3px"></i>
<i class="mm g" style="left:831px;top:10px;width:6px"></i>
<i class="mm g" style="left:838px;top:10px;width:4px"></i>
<i class="mm g" style="left:843px;top:10px;width:3px"></i>
<i class="mm g" style="left:847px;top:10px;width:5px"></i>
<i class="mm g" style="left:853px;top:10px;width:7px"></i>
<i class="mm g" style="left:861px;top:10px;width:3px"></i>
<i class="mm g" style="left:865px;top:10px;width:3px"></i>
<i class="mm g" style="left:869px;top:10px;width:2px"></i>
<i class="mm g" style="left:872px;top:10px;width:5px"></i>
<i class="mm g" style="left:878px;top:10px;width:9px"></i>
<i class="mm g" style="left:888px;top:10px;width:8px"></i>
<i class="mm g" style="left:822px;top:12px;width:7px"></i>
<i class="mm g" style="left:830px;top:12px;width:9px"></i>
<i class="mm g" style="left:840px;top:12px;width:9px"></i>
<i class="mm g" style="left:850px;top:12px;width:7px"></i>
<i class="mm g" style="left:858px;top:12px;width:6px"></i>
<i class="mm g" style="left:865px;top:12px;width:5px"></i>
<i class="mm g" style="left:871px;top:12px;width:4px"></i>
<i class="mm g" style="left:876px;top:12px;width:5px"></i>
<i class="mm g" style="left:882px;top:12px;width:3px"></i>
<i class="mm g" style="left:886px;top:12px;width:6px"></i>
<i class="mm g" style="left:893px;top:12px;width:1px"></i>
<i class="mm g" style="left:822px;top:14px;width:7px"></i>
<i class="mm g" style="left:830px;top:14px;width:9px"></i>
<i class="mm g" style="left:840px;top:14px;width:6px"></i>
<i class="mm g" style="left:847px;top:14px;width:3px"></i>
<i class="mm g" style="left:851px;top:14px;width:3px"></i>
<i class="mm g" style="left:855px;top:14px;width:8px"></i>
<i class="mm g" style="left:864px;top:14px;width:4px"></i>
<i class="mm g" style="left:869px;top:14px;width:7px"></i>
<i class="mm g" style="left:877px;top:14px;width:4px"></i>
<i class="mm g" style="left:882px;top:14px;width:9px"></i>
<i class="mm g" style="left:822px;top:16px;width:8px"></i>
<i class="mm g" style="left:831px;top:16px;width:2px"></i>
<i class="mm g" style="left:834px;top:16px;width:3px"></i>
<i class="mm g" style="left:838px;top:16px;width:7px"></i>
<i class="mm g" style="left:846px;top:16px;width:7px"></i>
<i class="mm g" style="left:854px;top:16px;width:7px"></i>
<i class="mm g" style="left:862px;top:16px;width:9px"></i>
<i class="mm g" style="left:872px;top:16px;width:9px"></i>
<i class="mm g" style="left:882px;top:16px;width:3px"></i>
<i class="mm g" style="left:886px;top:16px;width:3px"></i>
<i class="mm g" style="left:890px;top:16px;width:6px"></i>
<i class="mm g" style="left:822px;top:18px;width:9px"></i>
<i class="mm g" style="left:832px;top:18px;width:3px"></i>
<i class="mm g" style="left:836px;top:18px;width:2px"></i>
<i class="mm g" style="left:839px;top:18px;width:6px"></i>
<i class="mm g" style="left:846px;top:18px;width:9px"></i>
<i class="mm g" style="left:856px;top:18px;width:6px"></i>
<i class="mm g" style="left:863px;top:18px;width:8px"></i>
<i class="mm g" style="left:872px;top:18px;width:7px"></i>
<i class="mm g" style="left:880px;top:18px;width:2px"></i>
<i class="mm g" style="left:883px;top:18px;width:9px"></i>
<i class="mm g" style="left:822px;top:20px;width:7px"></i>
<i class="mm g" style="left:830px;top:20px;width:4px"></i>
<i class="mm g" style="left:835px;top:20px;width:3px"></i>
<i class="mm g" style="left:839px;top:20px;width:9px"></i>
<i class="mm g" style="left:849px;top:20px;width:2px"></i>
<i class="mm g" style="left:852px;top:20px;width:5px"></i>
<i class="mm g" style="left:858px;top:20px;width:6px"></i>
<i class="mm g" style="left:865px;top:20px;width:4px"></i>
<i class="mm g" style="left:870px;top:20px;width:5px"></i>
<i class="mm g" style="left:876px;top:20px;width:8px"></i>
<i class="mm g" style="left:885px;top:20px;width:8px"></i>
<i class="mm g" style="left:894px;top:20px;width:1px"></i>
<i class="mm g" style="left:822px;top:22px;width:3px"></i>
<i class="mm g" style="left:826px;top:22px;width:4px"></i>
<i class="mm g" style="left:831px;top:22px;width:9px"></i>
<i class="mm g" style="left:841px;top:22px;width:8px"></i>
<i class="mm g" style="left:850px;top:22px;width:6px"></i>
<i class="mm g" style="left:857px;top:22px;width:4px"></i>
<i class="mm g" style="left:862px;top:22px;width:8px"></i>
<i class="mm g" style="left:871px;top:22px;width:6px"></i>
<i class="mm g" style="left:878px;top:22px;width:2px"></i>
<i class="mm g" style="left:826px;top:24px;width:7px"></i>
<i class="mm g" style="left:834px;top:24px;width:8px"></i>
<i class="mm g" style="left:843px;top:24px;width:5px"></i>
<i class="mm g" style="left:849px;top:24px;width:1px"></i>
<i class="mm g" style="left:822px;top:26px;width:3px"></i>
<i class="mm g" style="left:826px;top:26px;width:4px"></i>
<i class="mm g" style="left:831px;top:26px;width:4px"></i>
<i class="mm g" style="left:836px;top:26px;width:5px"></i>
<i class="mm g" style="left:842px;top:26px;width:5px"></i>
<i class="mm g" style="left:848px;top:26px;width:2px"></i>
<i class="mm g" style="left:851px;top:26px;width:7px"></i>
<i class="mm g" style="left:822px;top:28px;width:8px"></i>
<i class="mm w" style="left:831px;top:28px;width:2px"></i>
<i class="mm o" style="left:834px;top:28px;width:5px"></i>
<i class="mm w" style="left:839px;top:28px;width:1px"></i>
<i class="mm g" style="left:822px;top:30px;width:4px"></i>
<i class="mm g" style="left:827px;top:30px;width:6px"></i>
<i class="mm g" style="left:834px;top:30px;width:2px"></i>
<i class="mm w" style="left:837px;top:30px;width:2px"></i>
<i class="mm g" style="left:840px;top:30px;width:2px"></i>
<i class="mm g" style="left:843px;top:30px;width:4px"></i>
<i class="mm g" style="left:848px;top:30px;width:8px"></i>
<i class="mm g" style="left:857px;top:30px;width:3px"></i>
<i class="mm g" style="left:822px;top:32px;width:7px"></i>
<i class="mm g" style="left:830px;top:32px;width:4px"></i>
<i class="mm r" style="left:835px;top:32px;width:2px"></i>
<i class="mm o" style="left:838px;top:32px;width:4px"></i>
<i class="mm w" style="left:842px;top:32px;width:1px"></i>
<i class="mm g" style="left:822px;top:34px;width:2px"></i>
<i class="mm g" style="left:825px;top:34px;width:9px"></i>
<i class="mm w" style="left:835px;top:34px;width:2px"></i>
<i class="mm p" style="left:838px;top:34px;width:1px"></i>
<i class="mm g" style="left:839px;top:34px;width:8px"></i>
<i class="mm g" style="left:848px;top:34px;width:8px"></i>
<i class="mm g" style="left:857px;top:34px;width:8px"></i>
<i class="mm g" style="left:866px;top:34px;width:8px"></i>
<i class="mm g" style="left:875px;top:34px;width:3px"></i>
<i class="mm p" style="left:878px;top:34px;width:1px"></i>
<i class="mm g" style="left:822px;top:36px;width:9px"></i>
<i class="mm g" style="left:832px;top:36px;width:8px"></i>
<i class="mm w" style="left:841px;top:36px;width:2px"></i>
<i class="mm p" style="left:844px;top:36px;width:1px"></i>
<i class="mm g" style="left:845px;top:36px;width:2px"></i>
<i class="mm g" style="left:848px;top:36px;width:5px"></i>
<i class="mm g" style="left:854px;top:36px;width:3px"></i>
<i class="mm g" style="left:858px;top:36px;width:5px"></i>
<i class="mm g" style="left:864px;top:36px;width:9px"></i>
<i class="mm g" style="left:874px;top:36px;width:4px"></i>
<i class="mm g" style="left:879px;top:36px;width:3px"></i>
<i class="mm g" style="left:883px;top:36px;width:7px"></i>
<i class="mm g" style="left:891px;top:36px;width:2px"></i>
<i class="mm p" style="left:893px;top:36px;width:1px"></i>
<i class="mm g" style="left:822px;top:38px;width:3px"></i>
<i class="mm g" style="left:826px;top:38px;width:2px"></i>
<i class="mm g" style="left:829px;top:38px;width:4px"></i>
<i class="mm w" style="left:834px;top:38px;width:2px"></i>
<i class="mm p" style="left:837px;top:38px;width:1px"></i>
<i class="mm o" style="left:826px;top:40px;width:1px"></i>
<i class="mm g" style="left:827px;top:40px;width:3px"></i>
<i class="mm g" style="left:831px;top:40px;width:7px"></i>
<i class="mm g" style="left:839px;top:40px;width:2px"></i>
<i class="mm g" style="left:842px;top:40px;width:3px"></i>
<i class="mm g" style="left:846px;top:40px;width:5px"></i>
<i class="mm g" style="left:852px;top:40px;width:8px"></i>
<i class="mm g" style="left:861px;top:40px;width:4px"></i>
<i class="mm g" style="left:866px;top:40px;width:6px"></i>
<i class="mm g" style="left:873px;top:40px;width:4px"></i>
<i class="mm o" style="left:877px;top:40px;width:1px"></i>
<i class="mm o" style="left:826px;top:42px;width:1px"></i>
<i class="mm g" style="left:827px;top:42px;width:7px"></i>
<i class="mm g" style="left:835px;top:42px;width:9px"></i>
<i class="mm g" style="left:845px;top:42px;width:3px"></i>
<i class="mm g" style="left:849px;top:42px;width:3px"></i>
<i class="mm g" style="left:853px;top:42px;width:9px"></i>
<i class="mm g" style="left:863px;top:42px;width:9px"></i>
<i class="mm g" style="left:873px;top:42px;width:9px"></i>
<i class="mm o" style="left:882px;top:42px;width:1px"></i>
<i class="mm o" style="left:826px;top:44px;width:1px"></i>
<i class="mm g" style="left:827px;top:44px;width:9px"></i>
<i class="mm g" style="left:837px;top:44px;width:6px"></i>
<i class="mm g" style="left:844px;top:44px;width:3px"></i>
<i class="mm g" style="left:848px;top:44px;width:4px"></i>
<i class="mm g" style="left:853px;top:44px;width:3px"></i>
<i class="mm g" style="left:857px;top:44px;width:7px"></i>
<i class="mm g" style="left:865px;top:44px;width:6px"></i>
<i class="mm g" style="left:872px;top:44px;width:7px"></i>
<i class="mm o" style="left:879px;top:44px;width:1px"></i>
<i class="mm o" style="left:826px;top:46px;width:1px"></i>
<i class="mm g" style="left:827px;top:46px;width:4px"></i>
<i class="mm g" style="left:832px;top:46px;width:2px"></i>
<i class="mm g" style="left:835px;top:46px;width:5px"></i>
<i class="mm g" style="left:841px;top:46px;width:7px"></i>
<i class="mm g" style="left:849px;top:46px;width:4px"></i>
<i class="mm g" style="left:854px;top:46px;width:2px"></i>
<i class="mm g" style="left:857px;top:46px;width:6px"></i>
<i class="mm g" style="left:864px;top:46px;width:3px"></i>
<i class="mm g" style="left:868px;top:46px;width:6px"></i>
<i class="mm o" style="left:874px;top:46px;width:1px"></i>
<i class="mm o" style="left:826px;top:48px;width:1px"></i>
<i class="mm g" style="left:827px;top:48px;width:7px"></i>
<i class="mm g" style="left:835px;top:48px;width:4px"></i>
<i class="mm g" style="left:840px;top:48px;width:7px"></i>
<i class="mm g" style="left:848px;top:48px;width:5px"></i>
<i class="mm g" style="left:854px;top:48px;width:7px"></i>
<i class="mm g" style="left:862px;top:48px;width:5px"></i>
<i class="mm g" style="left:868px;top:48px;width:5px"></i>
<i class="mm g" style="left:874px;top:48px;width:5px"></i>
<i class="mm g" style="left:880px;top:48px;width:1px"></i>
<i class="mm o" style="left:881px;top:48px;width:1px"></i>
<i class="mm o" style="left:826px;top:50px;width:1px"></i>
<i class="mm g" style="left:827px;top:50px;width:5px"></i>
<i class="mm g" style="left:833px;top:50px;width:5px"></i>
<i class="mm g" style="left:839px;top:50px;width:9px"></i>
<i class="mm g" style="left:849px;top:50px;width:7px"></i>
<i class="mm g" style="left:857px;top:50px;width:2px"></i>
<i class="mm g" style="left:860px;top:50px;width:2px"></i>
<i class="mm g" style="left:863px;top:50px;width:6px"></i>
<i class="mm g" style="left:870px;top:50px;width:9px"></i>
<i class="mm g" style="left:880px;top:50px;width:5px"></i>
<i class="mm o" style="left:885px;top:50px;width:1px"></i>
<i class="mm o" style="left:826px;top:52px;width:1px"></i>
<i class="mm g" style="left:827px;top:52px;width:5px"></i>
<i class="mm g" style="left:833px;top:52px;width:7px"></i>
<i class="mm g" style="left:841px;top:52px;width:9px"></i>
<i class="mm g" style="left:851px;top:52px;width:7px"></i>
<i class="mm g" style="left:859px;top:52px;width:7px"></i>
<i class="mm g" style="left:867px;top:52px;width:3px"></i>
<i class="mm g" style="left:871px;top:52px;width:5px"></i>
<i class="mm o" style="left:876px;top:52px;width:1px"></i>
<i class="mm o" style="left:826px;top:54px;width:1px"></i>
<i class="mm g" style="left:827px;top:54px;width:3px"></i>
<i class="mm g" style="left:831px;top:54px;width:5px"></i>
<i class="mm g" style="left:837px;top:54px;width:9px"></i>
<i class="mm g" style="left:847px;top:54px;width:5px"></i>
<i class="mm g" style="left:853px;top:54px;width:7px"></i>
<i class="mm g" style="left:861px;top:54px;width:5px"></i>
<i class="mm g" style="left:867px;top:54px;width:9px"></i>
<i class="mm g" style="left:877px;top:54px;width:2px"></i>
<i class="mm o" style="left:879px;top:54px;width:1px"></i>
<i class="mm o" style="left:826px;top:56px;width:1px"></i>
<i class="mm g" style="left:827px;top:56px;width:9px"></i>
<i class="mm g" style="left:837px;top:56px;width:7px"></i>
<i class="mm g" style="left:845px;top:56px;width:3px"></i>
<i class="mm g" style="left:849px;top:56px;width:3px"></i>
<i class="mm g" style="left:853px;top:56px;width:8px"></i>
<i class="mm g" style="left:862px;top:56px;width:5px"></i>
<i class="mm g" style="left:868px;top:56px;width:5px"></i>
<i class="mm o" style="left:873px;top:56px;width:1px"></i>
<i class="mm p" style="left:822px;top:58px;width:1px"></i>
<i class="mm w" style="left:818px;top:60px;width:2px"></i>
<i class="mm d" style="left:818px;top:66px;width:2px"></i>
<i class="mm r" style="left:818px;top:68px;width:9px"></i>
<i class="mm r" style="left:828px;top:68px;width:5px"></i>
<i class="mm r" style="left:818px;top:72px;width:5px"></i>
<i class="mm r" style="left:824px;top:72px;width:10px"></i>
<i class="mm r" style="left:818px;top:74px;width:6px"></i>
<i class="mm r" style="left:822px;top:76px;width:5px"></i>
<i class="mm w" style="left:827px;top:76px;width:4px"></i>
<i class="mm w" style="left:832px;top:76px;width:8px"></i>
<i class="mm w" style="left:841px;top:76px;width:6px"></i>
<i class="mm r" style="left:822px;top:78px;width:5px"></i>
<i class="mm g" style="left:827px;top:78px;width:3px"></i>
<i class="mm g" style="left:831px;top:78px;width:8px"></i>
<i class="mm g" style="left:840px;top:78px;width:9px"></i>
<i class="mm g" style="left:850px;top:78px;width:8px"></i>
<i class="mm g" style="left:859px;top:78px;width:3px"></i>
<i class="mm g" style="left:863px;top:78px;width:4px"></i>
<i class="mm g" style="left:868px;top:78px;width:4px"></i>
<i class="mm g" style="left:873px;top:78px;width:4px"></i>
<i class="mm g" style="left:878px;top:78px;width:1px"></i>
<i class="mm r" style="left:822px;top:80px;width:7px"></i>
<i class="mm w" style="left:829px;top:80px;width:4px"></i>
<i class="mm w" style="left:834px;top:80px;width:9px"></i>
<i class="mm w" style="left:844px;top:80px;width:4px"></i>
<i class="mm w" style="left:849px;top:80px;width:6px"></i>
<i class="mm r" style="left:855px;top:80px;width:8px"></i>
<i class="mm r" style="left:818px;top:82px;width:7px"></i>
<i class="mm r" style="left:818px;top:86px;width:6px"></i>
<i class="mm r" style="left:822px;top:88px;width:4px"></i>
<i class="mm w" style="left:826px;top:88px;width:7px"></i>
<i class="mm w" style="left:834px;top:88px;width:4px"></i>
<i class="mm w" style="left:839px;top:88px;width:4px"></i>
<i class="mm w" style="left:844px;top:88px;width:2px"></i>
<i class="mm w" style="left:847px;top:88px;width:2px"></i>
<i class="mm w" style="left:850px;top:88px;width:3px"></i>
<i class="mm w" style="left:854px;top:88px;width:4px"></i>
<i class="mm w" style="left:859px;top:88px;width:7px"></i>
<i class="mm r" style="left:866px;top:88px;width:5px"></i>
<i class="mm r" style="left:822px;top:90px;width:4px"></i>
<i class="mm w" style="left:826px;top:90px;width:5px"></i>
<i class="mm w" style="left:832px;top:90px;width:5px"></i>
<i class="mm w" style="left:838px;top:90px;width:2px"></i>
<i class="mm w" style="left:841px;top:90px;width:6px"></i>
<i class="mm w" style="left:848px;top:90px;width:5px"></i>
<i class="mm w" style="left:854px;top:90px;width:6px"></i>
<i class="mm w" style="left:861px;top:90px;width:1px"></i>
<i class="mm r" style="left:862px;top:90px;width:5px"></i>
<i class="mm r" style="left:822px;top:92px;width:3px"></i>
<i class="mm g" style="left:825px;top:92px;width:7px"></i>
<i class="mm g" style="left:833px;top:92px;width:6px"></i>
<i class="mm g" style="left:840px;top:92px;width:8px"></i>
<i class="mm g" style="left:849px;top:92px;width:4px"></i>
<i class="mm g" style="left:854px;top:92px;width:2px"></i>
<i class="mm g" style="left:857px;top:92px;width:7px"></i>
<i class="mm g" style="left:865px;top:92px;width:9px"></i>
<i class="mm r" style="left:874px;top:92px;width:4px"></i>
<i class="mm w" style="left:822px;top:94px;width:1px"></i>
<i class="mm r" style="left:823px;top:94px;width:1px"></i>
<i class="mm w" style="left:824px;top:94px;width:1px"></i>
<i class="mm d" style="left:825px;top:94px;width:3px"></i>
<i class="mm g" style="left:829px;top:94px;width:5px"></i>
<i class="mm g" style="left:835px;top:94px;width:5px"></i>
<i class="mm g" style="left:841px;top:94px;width:4px"></i>
<i class="mm g" style="left:846px;top:94px;width:1px"></i>
<i class="mm w" style="left:848px;top:94px;width:1px"></i>
<i class="mm r" style="left:850px;top:94px;width:6px"></i>
<i class="mm p" style="left:856px;top:94px;width:1px"></i>
<i class="mm g" style="left:857px;top:94px;width:8px"></i>
<i class="mm p" style="left:865px;top:94px;width:1px"></i>
<i class="mm w" style="left:867px;top:94px;width:1px"></i>
<i class="mm g" style="left:869px;top:94px;width:3px"></i>
<i class="mm d" style="left:873px;top:94px;width:2px"></i>
<i class="mm w" style="left:875px;top:94px;width:2px"></i>
<i class="mm r" style="left:877px;top:94px;width:1px"></i>
<i class="mm w" style="left:878px;top:94px;width:1px"></i>
<i class="mm w" style="left:822px;top:96px;width:1px"></i>
<i class="mm r" style="left:823px;top:96px;width:1px"></i>
<i class="mm w" style="left:824px;top:96px;width:1px"></i>
<i class="mm d" style="left:825px;top:96px;width:3px"></i>
<i class="mm g" style="left:829px;top:96px;width:6px"></i>
<i class="mm g" style="left:836px;top:96px;width:3px"></i>
<i class="mm g" style="left:840px;top:96px;width:6px"></i>
<i class="mm g" style="left:847px;top:96px;width:1px"></i>
<i class="mm w" style="left:849px;top:96px;width:1px"></i>
<i class="mm r" style="left:851px;top:96px;width:6px"></i>
<i class="mm o" style="left:857px;top:96px;width:1px"></i>
<i class="mm g" style="left:858px;top:96px;width:12px"></i>
<i class="mm o" style="left:870px;top:96px;width:1px"></i>
<i class="mm d" style="left:872px;top:96px;width:2px"></i>
<i class="mm w" style="left:874px;top:96px;width:2px"></i>
<i class="mm r" style="left:876px;top:96px;width:1px"></i>
<i class="mm w" style="left:877px;top:96px;width:1px"></i>
<i class="mm d" style="left:822px;top:98px;width:5px"></i>
<i class="mm p" style="left:828px;top:98px;width:2px"></i>
<i class="mm o" style="left:831px;top:98px;width:1px"></i>
<i class="mm r" style="left:832px;top:98px;width:6px"></i>
<i class="mm p" style="left:838px;top:98px;width:1px"></i>
<i class="mm g" style="left:839px;top:98px;width:12px"></i>
<i class="mm p" style="left:851px;top:98px;width:1px"></i>
<i class="mm c" style="left:853px;top:98px;width:3px"></i>
<i class="mm g" style="left:857px;top:98px;width:8px"></i>
<i class="mm o" style="left:865px;top:98px;width:1px"></i>
<i class="mm w" style="left:866px;top:98px;width:1px"></i>
<i class="mm d" style="left:868px;top:98px;width:2px"></i>
<i class="mm w" style="left:826px;top:100px;width:1px"></i>
<i class="mm r" style="left:827px;top:100px;width:1px"></i>
<i class="mm w" style="left:828px;top:100px;width:1px"></i>
<i class="mm w" style="left:829px;top:100px;width:4px"></i>
<i class="mm w" style="left:834px;top:100px;width:5px"></i>
<i class="mm w" style="left:840px;top:100px;width:2px"></i>
<i class="mm w" style="left:843px;top:100px;width:4px"></i>
<i class="mm w" style="left:848px;top:100px;width:14px"></i>
<i class="mm w" style="left:862px;top:100px;width:2px"></i>
<i class="mm r" style="left:864px;top:100px;width:1px"></i>
<i class="mm w" style="left:865px;top:100px;width:1px"></i>
<i class="mm d" style="left:822px;top:102px;width:5px"></i>
<i class="mm p" style="left:828px;top:102px;width:6px"></i>
<i class="mm o" style="left:835px;top:102px;width:1px"></i>
<i class="mm r" style="left:836px;top:102px;width:6px"></i>
<i class="mm p" style="left:842px;top:102px;width:1px"></i>
<i class="mm g" style="left:843px;top:102px;width:12px"></i>
<i class="mm p" style="left:855px;top:102px;width:1px"></i>
<i class="mm c" style="left:858px;top:102px;width:3px"></i>
<i class="mm g" style="left:862px;top:102px;width:12px"></i>
<i class="mm o" style="left:874px;top:102px;width:1px"></i>
<i class="mm w" style="left:875px;top:102px;width:1px"></i>
<i class="mm d" style="left:877px;top:102px;width:2px"></i>
<i class="mm w" style="left:826px;top:104px;width:1px"></i>
<i class="mm r" style="left:827px;top:104px;width:1px"></i>
<i class="mm w" style="left:828px;top:104px;width:1px"></i>
<i class="mm w" style="left:829px;top:104px;width:4px"></i>
<i class="mm w" style="left:834px;top:104px;width:5px"></i>
<i class="mm w" style="left:840px;top:104px;width:2px"></i>
<i class="mm w" style="left:843px;top:104px;width:4px"></i>
<i class="mm w" style="left:848px;top:104px;width:8px"></i>
<i class="mm w" style="left:857px;top:104px;width:3px"></i>
<i class="mm w" style="left:861px;top:104px;width:13px"></i>
<i class="mm w" style="left:875px;top:104px;width:8px"></i>
<i class="mm w" style="left:883px;top:104px;width:2px"></i>
<i class="mm r" style="left:885px;top:104px;width:1px"></i>
<i class="mm w" style="left:886px;top:104px;width:1px"></i>
<i class="mm d" style="left:822px;top:106px;width:5px"></i>
<i class="mm p" style="left:828px;top:106px;width:6px"></i>
<i class="mm o" style="left:835px;top:106px;width:1px"></i>
<i class="mm r" style="left:836px;top:106px;width:6px"></i>
<i class="mm p" style="left:842px;top:106px;width:1px"></i>
<i class="mm g" style="left:843px;top:106px;width:12px"></i>
<i class="mm p" style="left:855px;top:106px;width:1px"></i>
<i class="mm c" style="left:858px;top:106px;width:3px"></i>
<i class="mm g" style="left:862px;top:106px;width:10px"></i>
<i class="mm o" style="left:872px;top:106px;width:1px"></i>
<i class="mm w" style="left:873px;top:106px;width:1px"></i>
<i class="mm d" style="left:875px;top:106px;width:2px"></i>
<i class="mm w" style="left:826px;top:108px;width:1px"></i>
<i class="mm r" style="left:827px;top:108px;width:1px"></i>
<i class="mm w" style="left:828px;top:108px;width:1px"></i>
<i class="mm w" style="left:829px;top:108px;width:4px"></i>
<i class="mm w" style="left:834px;top:108px;width:5px"></i>
<i class="mm w" style="left:840px;top:108px;width:2px"></i>
<i class="mm w" style="left:843px;top:108px;width:4px"></i>
<i class="mm w" style="left:848px;top:108px;width:8px"></i>
<i class="mm w" style="left:857px;top:108px;width:10px"></i>
<i class="mm w" style="left:867px;top:108px;width:2px"></i>
<i class="mm r" style="left:869px;top:108px;width:1px"></i>
<i class="mm w" style="left:870px;top:108px;width:1px"></i>
<i class="mm d" style="left:822px;top:110px;width:5px"></i>
<i class="mm p" style="left:828px;top:110px;width:4px"></i>
<i class="mm w" style="left:832px;top:110px;width:1px"></i>
<i class="mm d" style="left:834px;top:110px;width:2px"></i>
<i class="mm w" style="left:826px;top:112px;width:1px"></i>
<i class="mm r" style="left:827px;top:112px;width:1px"></i>
<i class="mm w" style="left:828px;top:112px;width:1px"></i>
<i class="mm w" style="left:829px;top:112px;width:5px"></i>
<i class="mm w" style="left:835px;top:112px;width:2px"></i>
<i class="mm w" style="left:838px;top:112px;width:5px"></i>
<i class="mm w" style="left:844px;top:112px;width:2px"></i>
<i class="mm w" style="left:847px;top:112px;width:13px"></i>
<i class="mm w" style="left:860px;top:112px;width:2px"></i>
<i class="mm r" style="left:862px;top:112px;width:1px"></i>
<i class="mm w" style="left:863px;top:112px;width:1px"></i>
<i class="mm d" style="left:822px;top:114px;width:5px"></i>
<i class="mm p" style="left:828px;top:114px;width:5px"></i>
<i class="mm d" style="left:834px;top:114px;width:2px"></i>
<i class="mm w" style="left:822px;top:116px;width:1px"></i>
<i class="mm r" style="left:823px;top:116px;width:1px"></i>
<i class="mm w" style="left:824px;top:116px;width:1px"></i>
<i class="mm w" style="left:825px;top:116px;width:9px"></i>
<i class="mm w" style="left:835px;top:116px;width:3px"></i>
<i class="mm w" style="left:839px;top:116px;width:6px"></i>
<i class="mm w" style="left:845px;top:116px;width:2px"></i>
<i class="mm r" style="left:847px;top:116px;width:1px"></i>
<i class="mm w" style="left:848px;top:116px;width:1px"></i>
<i class="mm w" style="left:822px;top:118px;width:1px"></i>
<i class="mm r" style="left:823px;top:118px;width:2px"></i>
<i class="mm w" style="left:825px;top:118px;width:1px"></i>
<i class="mm d" style="left:826px;top:120px;width:5px"></i>
<i class="mm p" style="left:832px;top:120px;width:7px"></i>
<i class="mm o" style="left:840px;top:120px;width:1px"></i>
<i class="mm r" style="left:841px;top:120px;width:6px"></i>
<i class="mm p" style="left:847px;top:120px;width:1px"></i>
<i class="mm g" style="left:848px;top:120px;width:11px"></i>
<i class="mm p" style="left:859px;top:120px;width:1px"></i>
<i class="mm c" style="left:862px;top:120px;width:2px"></i>
<i class="mm r" style="left:865px;top:120px;width:9px"></i>
<i class="mm o" style="left:874px;top:120px;width:1px"></i>
<i class="mm w" style="left:875px;top:120px;width:1px"></i>
<i class="mm d" style="left:877px;top:120px;width:2px"></i>
<i class="mm w" style="left:830px;top:122px;width:1px"></i>
<i class="mm r" style="left:831px;top:122px;width:2px"></i>
<i class="mm w" style="left:833px;top:122px;width:1px"></i>
<i class="mm d" style="left:834px;top:122px;width:3px"></i>
<i class="mm r" style="left:838px;top:122px;width:9px"></i>
<i class="mm d" style="left:848px;top:122px;width:2px"></i>
<i class="mm w" style="left:850px;top:122px;width:2px"></i>
<i class="mm r" style="left:852px;top:122px;width:2px"></i>
<i class="mm w" style="left:854px;top:122px;width:1px"></i>
<i class="mm d" style="left:826px;top:124px;width:5px"></i>
<i class="mm p" style="left:832px;top:124px;width:10px"></i>
<i class="mm d" style="left:843px;top:124px;width:2px"></i>
<i class="mm w" style="left:822px;top:126px;width:2px"></i>
<i class="mm r" style="left:824px;top:126px;width:2px"></i>
<i class="mm w" style="left:826px;top:126px;width:1px"></i>
<i class="mm w" style="left:822px;top:128px;width:1px"></i>
<i class="mm r" style="left:823px;top:128px;width:1px"></i>
<i class="mm w" style="left:824px;top:128px;width:1px"></i>
<i class="mm w" style="left:825px;top:128px;width:6px"></i>
<i class="mm w" style="left:832px;top:128px;width:13px"></i>
<i class="mm w" style="left:845px;top:128px;width:2px"></i>
<i class="mm r" style="left:847px;top:128px;width:1px"></i>
<i class="mm w" style="left:848px;top:128px;width:1px"></i>
<i class="mm w" style="left:822px;top:130px;width:1px"></i>
<i class="mm r" style="left:823px;top:130px;width:2px"></i>
<i class="mm w" style="left:825px;top:130px;width:1px"></i>
<i class="mm d" style="left:826px;top:132px;width:5px"></i>
<i class="mm p" style="left:832px;top:132px;width:7px"></i>
<i class="mm o" style="left:840px;top:132px;width:1px"></i>
<i class="mm r" style="left:841px;top:132px;width:6px"></i>
<i class="mm p" style="left:847px;top:132px;width:1px"></i>
<i class="mm g" style="left:848px;top:132px;width:20px"></i>
<i class="mm p" style="left:868px;top:132px;width:1px"></i>
<i class="mm c" style="left:871px;top:132px;width:2px"></i>
<i class="mm r" style="left:874px;top:132px;width:17px"></i>
<i class="mm o" style="left:891px;top:132px;width:1px"></i>
<i class="mm w" style="left:892px;top:132px;width:1px"></i>
<i class="mm d" style="left:894px;top:132px;width:2px"></i>
<i class="mm w" style="left:830px;top:134px;width:1px"></i>
<i class="mm r" style="left:831px;top:134px;width:2px"></i>
<i class="mm w" style="left:833px;top:134px;width:1px"></i>
<i class="mm d" style="left:834px;top:134px;width:3px"></i>
<i class="mm r" style="left:838px;top:134px;width:17px"></i>
<i class="mm d" style="left:856px;top:134px;width:2px"></i>
<i class="mm w" style="left:858px;top:134px;width:2px"></i>
<i class="mm r" style="left:860px;top:134px;width:2px"></i>
<i class="mm w" style="left:862px;top:134px;width:1px"></i>
<i class="mm d" style="left:826px;top:136px;width:5px"></i>
<i class="mm p" style="left:832px;top:136px;width:10px"></i>
<i class="mm d" style="left:843px;top:136px;width:2px"></i>
<i class="mm w" style="left:822px;top:138px;width:2px"></i>
<i class="mm r" style="left:824px;top:138px;width:2px"></i>
<i class="mm w" style="left:826px;top:138px;width:1px"></i>
<i class="mm w" style="left:822px;top:140px;width:1px"></i>
<i class="mm r" style="left:823px;top:140px;width:1px"></i>
<i class="mm w" style="left:824px;top:140px;width:1px"></i>
<i class="mm w" style="left:825px;top:140px;width:9px"></i>
<i class="mm w" style="left:835px;top:140px;width:3px"></i>
<i class="mm w" style="left:839px;top:140px;width:6px"></i>
<i class="mm w" style="left:845px;top:140px;width:2px"></i>
<i class="mm r" style="left:847px;top:140px;width:1px"></i>
<i class="mm w" style="left:848px;top:140px;width:1px"></i>
<i class="mm w" style="left:822px;top:142px;width:1px"></i>
<i class="mm r" style="left:823px;top:142px;width:7px"></i>
<i class="mm w" style="left:830px;top:142px;width:1px"></i>
<i class="mm d" style="left:826px;top:144px;width:5px"></i>
<i class="mm p" style="left:832px;top:144px;width:7px"></i>
<i class="mm o" style="left:840px;top:144px;width:1px"></i>
<i class="mm r" style="left:841px;top:144px;width:6px"></i>
<i class="mm p" style="left:847px;top:144px;width:1px"></i>
<i class="mm g" style="left:848px;top:144px;width:11px"></i>
<i class="mm p" style="left:859px;top:144px;width:1px"></i>
<i class="mm c" style="left:861px;top:144px;width:2px"></i>
<i class="mm r" style="left:864px;top:144px;width:7px"></i>
<i class="mm w" style="left:872px;top:144px;width:2px"></i>
<i class="mm r" style="left:875px;top:144px;width:8px"></i>
<i class="mm o" style="left:883px;top:144px;width:1px"></i>
<i class="mm w" style="left:884px;top:144px;width:1px"></i>
<i class="mm d" style="left:886px;top:144px;width:2px"></i>
<i class="mm w" style="left:830px;top:146px;width:1px"></i>
<i class="mm r" style="left:831px;top:146px;width:2px"></i>
<i class="mm w" style="left:833px;top:146px;width:1px"></i>
<i class="mm w" style="left:834px;top:146px;width:1px"></i>
<i class="mm r" style="left:835px;top:146px;width:1px"></i>
<i class="mm w" style="left:836px;top:146px;width:1px"></i>
<i class="mm d" style="left:837px;top:146px;width:3px"></i>
<i class="mm g" style="left:841px;top:146px;width:6px"></i>
<i class="mm g" style="left:848px;top:146px;width:1px"></i>
<i class="mm w" style="left:850px;top:146px;width:1px"></i>
<i class="mm o" style="left:852px;top:146px;width:1px"></i>
<i class="mm r" style="left:853px;top:146px;width:7px"></i>
<i class="mm c" style="left:861px;top:146px;width:1px"></i>
<i class="mm o" style="left:863px;top:146px;width:1px"></i>
<i class="mm o" style="left:864px;top:146px;width:1px"></i>
<i class="mm w" style="left:866px;top:146px;width:1px"></i>
<i class="mm g" style="left:868px;top:146px;width:2px"></i>
<i class="mm g" style="left:871px;top:146px;width:1px"></i>
<i class="mm d" style="left:873px;top:146px;width:2px"></i>
<i class="mm w" style="left:875px;top:146px;width:2px"></i>
<i class="mm r" style="left:877px;top:146px;width:1px"></i>
<i class="mm w" style="left:878px;top:146px;width:1px"></i>
<i class="mm d" style="left:879px;top:146px;width:3px"></i>
<i class="mm r" style="left:883px;top:146px;width:8px"></i>
<i class="mm o" style="left:830px;top:148px;width:1px"></i>
<i class="mm g" style="left:831px;top:148px;width:8px"></i>
<i class="mm o" style="left:839px;top:148px;width:1px"></i>
<i class="mm w" style="left:841px;top:148px;width:1px"></i>
<i class="mm g" style="left:843px;top:148px;width:1px"></i>
<i class="mm g" style="left:845px;top:148px;width:1px"></i>
<i class="mm g" style="left:847px;top:148px;width:9px"></i>
<i class="mm g" style="left:857px;top:148px;width:1px"></i>
<i class="mm w" style="left:859px;top:148px;width:1px"></i>
<i class="mm r" style="left:861px;top:148px;width:8px"></i>
<i class="mm o" style="left:869px;top:148px;width:1px"></i>
<i class="mm g" style="left:870px;top:148px;width:10px"></i>
<i class="mm o" style="left:880px;top:148px;width:1px"></i>
<i class="mm d" style="left:882px;top:148px;width:2px"></i>
<i class="mm w" style="left:884px;top:148px;width:2px"></i>
<i class="mm r" style="left:886px;top:148px;width:2px"></i>
<i class="mm w" style="left:888px;top:148px;width:1px"></i>
<i class="mm d" style="left:826px;top:150px;width:5px"></i>
<i class="mm p" style="left:832px;top:150px;width:10px"></i>
<i class="mm d" style="left:843px;top:150px;width:2px"></i>
<i class="mm w" style="left:822px;top:152px;width:2px"></i>
<i class="mm r" style="left:824px;top:152px;width:7px"></i>
<i class="mm w" style="left:831px;top:152px;width:1px"></i>
<i class="mm w" style="left:818px;top:154px;width:2px"></i>
<i class="mm r" style="left:820px;top:154px;width:4px"></i>
<i class="mm w" style="left:824px;top:154px;width:1px"></i>
<i class="mm w" style="left:818px;top:158px;width:2px"></i>
<i class="mm r" style="left:820px;top:158px;width:4px"></i>
<i class="mm w" style="left:824px;top:158px;width:1px"></i>
<div class="a" style="left:898px;top:0px;width:12px;height:762px;background:#282c34;border-left:1px solid #2b2f37"></div>
<div class="a" style="left:898px;top:489px;width:12px;height:2px;background:#4d78cc"></div>
  </div>
  <div id="panel">
<div class="pt" style="left:20px;top:12px;">PROBLEMS</div>
<div class="pt" style="left:98px;top:12px;">OUTPUT</div>
<div class="pt" style="left:163px;top:12px;">DEBUG CONSOLE</div>
<div class="pt" style="left:272px;top:12px;color:#d7dae0">TERMINAL</div>
<div class="pt" style="left:348px;top:12px;">PORTS</div>
<div class="a" style="left:270px;top:28px;width:56px;height:1px;background:#d7dae0"></div>
<svg style="left:676px;top:10px" width="16" height="16" viewBox="0 0 16 16" ><rect x="1" y="1.5" width="14" height="13" rx="1" fill="none" stroke="#a3a9b4" stroke-width="1.1"/><path d="M4 5l3 2.5L4 10M8 11h4" fill="none" stroke="#a3a9b4" stroke-width="1.1"/></svg>
<div class="a" style="left:696px;top:10px;font-size:12.5px;line-height:16px;color:#c8ccd4">php</div>
<svg style="left:725px;top:10px" width="15" height="15" viewBox="0 0 15 15" ><path d="M7.5 1v13M1 7.5h13" stroke="#a3a9b4" stroke-width="1.2"/></svg>
<svg style="left:745px;top:14px" width="9" height="8" viewBox="0 0 9 8" ><path d="M1 2 4.5 5.5 8 2" fill="none" stroke="#a3a9b4" stroke-width="1"/></svg>
<svg style="left:765px;top:10px" width="15" height="15" viewBox="0 0 15 15" ><rect x="1" y="1" width="13" height="13" rx="1" fill="none" stroke="#a3a9b4" stroke-width="1.1"/><path d="M7.5 1v13" stroke="#a3a9b4" stroke-width="1.1"/></svg>
<svg style="left:791px;top:9px" width="13" height="16" viewBox="0 0 13 16" ><path d="M1 3.5h11M4.5 3.5V1.5h4v2M2.5 3.5l.8 11h6.4l.8-11M5 6v6M8 6v6" fill="none" stroke="#a3a9b4" stroke-width="1.1"/></svg>
<div class="a" style="left:816px;top:10px;font-size:17px;line-height:16px;color:#a3a9b4;letter-spacing:0.5px">···</div>
<div class="a" style="left:843px;top:12px;width:1px;height:16px;background:#3e4450"></div>
<svg style="left:856px;top:11px" width="14" height="14" viewBox="0 0 14 14" ><path d="M1 4.5V1h3.5M9.5 1H13v3.5M13 9.5V13H9.5M4.5 13H1V9.5" fill="none" stroke="#a3a9b4" stroke-width="1.2"/></svg>
<svg style="left:884px;top:12px" width="11" height="11" viewBox="0 0 11 11" ><path d="M1 1 10 10M10 1 1 10" stroke="#a3a9b4" stroke-width="1.2"/></svg>
<div class="tl" style="top:42.7px"><span style="color:#e5c07b;font-weight:bold">julia</span> <span style="color:#e8eaed;font-weight:bold">in</span> <span style="color:#4fb0c0">Curso-fundamentos-php-platzi</span></div>
<div class="tl" style="top:58.3px"><span style="color:#98c379;font-weight:bold">❯</span> <span style="color:#e5c07b">php</span> <span style="color:#8b919c">-S</span> <span style="color:#e8eaed">localhost:3000</span></div>
<div class="tl" style="top:76.4px">[Mon Sep 15 11:33:37 2025] [::1]:51335 Closing</div>
<div class="tl" style="top:92.6px">[Mon Sep 15 11:33:45 2025] [::1]:54757 Accepted</div>
<div class="tl" style="top:108.4px">[Mon Sep 15 11:33:45 2025] <span style="color:#98c379">[::1]:51359 [200]: GET /05_arreglos_asociativos.php</span></div>
<div class="tl" style="top:124.7px">[Mon Sep 15 11:33:45 2025] [::1]:51359 Closing</div>
<div class="a" style="left:20px;top:140px;width:9px;height:15px;border:1px solid #c8ccd4"></div>
<div class="a" style="left:0px;top:75px;width:898px;height:1px;background:#2c3038"></div>
<div class="a" style="left:898px;top:44px;width:12px;height:112px;background:#21252b;border-top:1px solid #30343c"></div>
<div class="a" style="left:898px;top:113px;width:12px;height:43px;background:#30353e"></div>
<div class="a" style="left:899px;top:72px;width:4px;height:6px;background:#4b515c"></div>
  </div>
  <div id="status">
<div class="a" style="left:0;top:0;width:34px;height:21px;background:#4d78cc"></div>
<svg style="left:11px;top:3px" width="14" height="15" viewBox="0 0 14 15" ><path d="M1.5 6.5 5.5 10.5 1.5 14.5M12.5 1 8.5 5 12.5 9" fill="none" stroke="#fff" stroke-width="1.3"/></svg>
<svg style="left:42px;top:5px" width="12" height="12" viewBox="0 0 12 12" ><circle cx="6" cy="6" r="5.3" fill="none" stroke="#9da5b4" stroke-width="1"/><path d="M3.8 3.8 8.2 8.2M8.2 3.8 3.8 8.2" stroke="#9da5b4" stroke-width="1"/></svg>
<div class="s" style="left:58px;top:3px;">0</div>
<svg style="left:68px;top:4px" width="13" height="13" viewBox="0 0 13 13" ><path d="M6.5 1 12.3 11.8H.7z" fill="none" stroke="#9da5b4" stroke-width="1"/><path d="M6.5 4.5v4M6.5 9.8v1" stroke="#9da5b4" stroke-width="1.2"/></svg>
<div class="s" style="left:86px;top:3px;">0</div>
<div class="s" style="left:460px;top:3px;">Ln 68, Col 53</div>
<div class="s" style="left:544px;top:3px;">Spaces: 4</div>
<div class="s" style="left:609px;top:3px;">UTF-8</div>
<div class="s" style="left:656px;top:3px;">CRLF</div>
<div class="s" style="left:699px;top:3px;">{ }</div>
<div class="s" style="left:719px;top:3px;">PHP</div>
<svg style="left:756px;top:4px" width="16" height="14" viewBox="0 0 16 14" ><path d="M3 4.5C3 2.5 5 1.5 8 1.5S13 2.5 13 4.5v1.5l1.5 1.5v3L8 13 1.5 10.5v-3L3 6z" fill="none" stroke="#9da5b4" stroke-width="1.1"/><path d="M5.5 8v2M10.5 8v2M1 1l14 12" stroke="#9da5b4" stroke-width="1.1"/></svg>
<svg style="left:787px;top:4px" width="13" height="14" viewBox="0 0 13 14" ><circle cx="6.5" cy="6" r="1.5" fill="none" stroke="#9da5b4" stroke-width="1"/><path d="M3.2 9.3a4.7 4.7 0 1 1 6.6 0M6.5 7.5v6" fill="none" stroke="#9da5b4" stroke-width="1.1"/><path d="M1.5 11a7 7 0 1 1 10 0" fill="none" stroke="#9da5b4" stroke-width="1"/></svg>
<div class="s" style="left:804px;top:3px;">Go Live</div>
<svg style="left:859px;top:4px" width="13" height="13" viewBox="0 0 13 13" ><circle cx="6.5" cy="6.5" r="5.5" fill="none" stroke="#9da5b4" stroke-width="1.1"/><path d="M2.8 10.2 10.2 2.8" stroke="#9da5b4" stroke-width="1.1"/></svg>
<div class="s" style="left:876px;top:3px;">Prettier</div>
<svg style="left:931px;top:3px" width="15" height="15" viewBox="0 0 15 15" ><path d="M7 2.5a4 4 0 0 0-4 4v3.5L1.5 12h11L11 10V6.5" fill="none" stroke="#9da5b4" stroke-width="1.1"/><path d="M5.5 13.5a1.5 1.5 0 0 0 3 0" fill="none" stroke="#9da5b4" stroke-width="1.1"/><circle cx="11.5" cy="3.5" r="2.3" fill="#9da5b4"/></svg>
  </div>
</div>
<div id="cr">
<div class="a" style="left:6px;top:6px;width:28px;height:28px;border-radius:8px;background:#363943"></div>
<svg style="left:14px;top:14px" width="12" height="12" viewBox="0 0 12 12" ><path d="M2.5 4.5 6 8l3.5-3.5" fill="none" stroke="#e3e3e3" stroke-width="1.6"/></svg>
<div class="a" style="left:41px;top:6px;width:226px;height:35px;border-radius:9px 9px 0 0;background:#363943"></div>
<div class="a" style="left:33px;top:32px;width:8px;height:8px;background:radial-gradient(circle at 0 0,transparent 7.5px,#363943 8px)"></div>
<div class="a" style="left:267px;top:32px;width:8px;height:8px;background:radial-gradient(circle at 100% 0,transparent 7.5px,#363943 8px)"></div>
<svg style="left:49px;top:13px" width="15" height="15" viewBox="0 0 15 15" ><circle cx="7.5" cy="7.5" r="7" fill="#9aa0a6"/><path d="M3 3.5c2 .5 3.5 1.8 3 3.5-.4 1.3-2 1.2-2.3 2.7-.2 1 .5 2 .3 3.5M12.5 3.2c-1.5.3-2.5 1.5-2.2 2.8.3 1.4 2 1.6 2.2 3 .2 1.3-.8 2.5-2 3.5M8 14c-.3-1.5.5-2.5 1.8-3.5" fill="none" stroke="#363943" stroke-width="1.5"/></svg>
<div class="a" style="left:72px;top:13px;font-size:12.8px;line-height:16px;color:#e3e3e3;white-space:nowrap;transform:scaleX(.914);transform-origin:0 50%">Curso de fundamentos de PHP</div>
<svg style="left:246px;top:15px" width="10" height="10" viewBox="0 0 10 10" ><path d="M1 1 9 9M9 1 1 9" stroke="#e3e3e3" stroke-width="1.5"/></svg>
<svg style="left:281px;top:12px" width="16" height="16" viewBox="0 0 16 16" ><path d="M11.2 12.4 8.4 14.4 2.1 7.8 8.7 1.6 13.5 6.8 9.5 10.6" fill="none" stroke="#2bd98f" stroke-width="2.3" stroke-linejoin="round" stroke-linecap="round"/></svg>
<div class="a" style="left:305px;top:13px;width:175px;overflow:hidden;white-space:nowrap;font-size:12.8px;line-height:16px;color:#c4c7cc;transform:scaleX(.914);transform-origin:0 50%;-webkit-mask-image:linear-gradient(to right,#000 158px,transparent 184px)">Arreglos asociativos en PHP para principiantes</div>
<svg style="left:480px;top:15px" width="10" height="10" viewBox="0 0 10 10" ><path d="M1 1 9 9M9 1 1 9" stroke="#c4c7cc" stroke-width="1.5"/></svg>
<div class="a" style="left:502px;top:12px;width:1px;height:16px;background:#3c3d42"></div>
<svg style="left:513px;top:13px" width="17" height="13" viewBox="0 0 17 13" ><rect x="0" y="0.5" width="17" height="12" rx="3.2" fill="#ff1e2a"/><path d="M6.8 3.8v5.4L11.3 6.5z" fill="#fff"/></svg>
<div class="a" style="left:538px;top:13px;width:175px;overflow:hidden;white-space:nowrap;font-size:13.4px;line-height:16px;color:#c4c7cc;transform:scaleX(.925);transform-origin:0 50%;-webkit-mask-image:linear-gradient(to right,#000 157px,transparent 178px)">Como dar formato a tu codigo en VS Code</div>
<svg style="left:712px;top:15px" width="10" height="10" viewBox="0 0 10 10" ><path d="M1 1 9 9M9 1 1 9" stroke="#c4c7cc" stroke-width="1.5"/></svg>
<div class="a" style="left:736px;top:12px;width:1px;height:16px;background:#3c3d42"></div>
<svg style="left:746px;top:14px" width="13" height="13" viewBox="0 0 13 13" ><path d="M6.5 0.5v12M0.5 6.5h12" stroke="#c4c7cc" stroke-width="1.6"/></svg>
<svg style="left:837px;top:13px" width="12" height="12" viewBox="0 0 12 12" ><path d="M0.5 6.5h11" stroke="#d5d7da" stroke-width="1"/></svg>
<svg style="left:883px;top:14px" width="12" height="12" viewBox="0 0 12 12" ><rect x="0.5" y="0.5" width="10" height="10" fill="none" stroke="#d5d7da" stroke-width="1.1"/></svg>
<svg style="left:929px;top:14px" width="12" height="12" viewBox="0 0 12 12" ><path d="M0.5 0.5 11.5 11.5M11.5 0.5 0.5 11.5" stroke="#d5d7da" stroke-width="1.1"/></svg>
<div id="ctool"></div>
<svg style="left:15px;top:56px" width="14" height="14" viewBox="0 0 14 14" ><path d="M13.5 7H1.5M7 1.5 1.5 7 7 12.5" fill="none" stroke="#dadce0" stroke-width="1.5"/></svg>
<svg style="left:51px;top:56px" width="14" height="14" viewBox="0 0 14 14" ><path d="M.5 7h12M7 1.5 12.5 7 7 12.5" fill="none" stroke="#8a8c91" stroke-width="1.5"/></svg>
<svg style="left:87px;top:56px" width="14" height="14" viewBox="0 0 14 14" ><path d="M12 7a5 5 0 1 1-1.5-3.6" fill="none" stroke="#dadce0" stroke-width="1.5"/><path d="M12.5 1v4h-4" fill="none" stroke="#dadce0" stroke-width="1.5"/></svg>
<div class="a" style="left:120px;top:46px;width:717px;height:34px;border-radius:17px;background:#22252c"></div>
<div class="a" style="left:125px;top:51px;width:24px;height:24px;border-radius:12px;background:#393c45"></div>
<svg style="left:130px;top:56px" width="14" height="14" viewBox="0 0 14 14" ><circle cx="7" cy="7" r="6" fill="none" stroke="#e3e3e3" stroke-width="1.3"/><path d="M7 6v4.2" stroke="#e3e3e3" stroke-width="1.5"/><circle cx="7" cy="4" r=".9" fill="#e3e3e3"/></svg>
<div class="a" style="left:157px;top:55px;font-size:14.5px;line-height:17px;color:#e8eaed;white-space:nowrap;transform:scaleX(.938);transform-origin:0 50%">localhost<span style="color:#d0d2d6">:3000/05_arreglos_asociativos.php</span></div>
<svg style="left:806px;top:55px" width="16" height="16" viewBox="0 0 16 16" ><path d="M8 1.2l2 4.3 4.6.5-3.4 3.1 1 4.6L8 11.3l-4.1 2.4 1-4.6L1.4 6l4.6-.5z" fill="none" stroke="#dadce0" stroke-width="1.3" stroke-linejoin="round"/></svg>
<svg style="left:856px;top:55px" width="16" height="16" viewBox="0 0 16 16" ><path d="M1 3h9M1 6.5h9M1 10h5" stroke="#dadce0" stroke-width="1.5"/><path d="M12.5 3v9" stroke="#dadce0" stroke-width="1.5"/><ellipse cx="11" cy="12.2" rx="2" ry="1.8" fill="#dadce0"/><path d="M12.5 3h2.5" stroke="#dadce0" stroke-width="1.5"/></svg>
<div class="a" style="left:889px;top:52px;width:22px;height:22px;border-radius:11px;background:#6b3a2a;color:#f2d2c9;font-size:12px;line-height:22px;text-align:center">J</div>
<svg style="left:933px;top:55px" width="6" height="16" viewBox="0 0 6 16" ><circle cx="3" cy="2" r="1.6" fill="#dadce0"/><circle cx="3" cy="8" r="1.6" fill="#dadce0"/><circle cx="3" cy="14" r="1.6" fill="#dadce0"/></svg>
<svg style="left:12px;top:92px" width="16" height="16" viewBox="0 0 16 16" ><rect x="1.5" y="1.5" width="4.5" height="4.5" fill="none" stroke="#c8cace" stroke-width="1.5"/><rect x="10" y="1.5" width="4.5" height="4.5" fill="none" stroke="#c8cace" stroke-width="1.5"/><rect x="1.5" y="10" width="4.5" height="4.5" fill="none" stroke="#c8cace" stroke-width="1.5"/><rect x="10" y="10" width="4.5" height="4.5" fill="none" stroke="#c8cace" stroke-width="1.5"/></svg>
<div class="a" style="left:43px;top:92px;width:1px;height:16px;background:#55575c"></div>
<svg style="left:60px;top:93px" width="17" height="14" viewBox="0 0 17 14" ><path d="M1 2.2a1 1 0 0 1 1-1h4.2l1.8 1.8h7a1 1 0 0 1 1 1v8.3a1 1 0 0 1-1 1H2a1 1 0 0 1-1-1z" fill="none" stroke="#c8cace" stroke-width="1.3"/></svg>
<div class="bm" style="left:84px;top:92px;">Dev</div>
<svg style="left:123px;top:93px" width="17" height="14" viewBox="0 0 17 14" ><path d="M1 2.2a1 1 0 0 1 1-1h4.2l1.8 1.8h7a1 1 0 0 1 1 1v8.3a1 1 0 0 1-1 1H2a1 1 0 0 1-1-1z" fill="none" stroke="#c8cace" stroke-width="1.3"/></svg>
<div class="bm" style="left:147px;top:92px;">Design</div>
<svg style="left:202px;top:93px" width="17" height="14" viewBox="0 0 17 14" ><path d="M1 2.2a1 1 0 0 1 1-1h4.2l1.8 1.8h7a1 1 0 0 1 1 1v8.3a1 1 0 0 1-1 1H2a1 1 0 0 1-1-1z" fill="none" stroke="#c8cace" stroke-width="1.3"/></svg>
<div class="bm" style="left:226px;top:92px;">Web</div>
<svg style="left:269px;top:93px" width="17" height="14" viewBox="0 0 17 14" ><path d="M1 2.2a1 1 0 0 1 1-1h4.2l1.8 1.8h7a1 1 0 0 1 1 1v8.3a1 1 0 0 1-1 1H2a1 1 0 0 1-1-1z" fill="none" stroke="#c8cace" stroke-width="1.3"/></svg>
<div class="bm" style="left:293px;top:92px;">AIA</div>
<svg style="left:330px;top:93px" width="17" height="14" viewBox="0 0 17 14" ><path d="M1 2.2a1 1 0 0 1 1-1h4.2l1.8 1.8h7a1 1 0 0 1 1 1v8.3a1 1 0 0 1-1 1H2a1 1 0 0 1-1-1z" fill="none" stroke="#c8cace" stroke-width="1.3"/></svg>
<div class="bm" style="left:354px;top:92px;">English</div>
<svg style="left:410px;top:93px" width="17" height="14" viewBox="0 0 17 14" ><path d="M1 2.2a1 1 0 0 1 1-1h4.2l1.8 1.8h7a1 1 0 0 1 1 1v8.3a1 1 0 0 1-1 1H2a1 1 0 0 1-1-1z" fill="none" stroke="#c8cace" stroke-width="1.3"/></svg>
<div class="bm" style="left:433px;top:92px;">Java</div>
<div class="a" style="left:473px;top:92px;width:16px;height:16px;background:#000"></div>
<div class="a" style="left:474px;top:95px;font-family:Liberation Mono;font-size:9px;line-height:10px;color:#4cd964;font-weight:bold;letter-spacing:-1px">JC</div>
<svg style="left:504px;top:92px" width="17" height="17" viewBox="0 0 16 16" ><path fill="#e8e8e8" d="M8 0C3.58 0 0 3.58 0 8c0 3.54 2.29 6.53 5.47 7.59.4.07.55-.17.55-.38 0-.19-.01-.82-.01-1.49-2.01.37-2.53-.49-2.69-.94-.09-.23-.48-.94-.82-1.13-.28-.15-.68-.52-.01-.53.63-.01 1.08.58 1.23.82.72 1.21 1.87.87 2.33.66.07-.52.28-.87.51-1.07-1.78-.2-3.64-.89-3.64-3.95 0-.87.31-1.59.82-2.15-.08-.2-.36-1.02.08-2.12 0 0 .67-.21 2.2.82.64-.18 1.32-.27 2-.27.68 0 1.36.09 2 .27 1.53-1.04 2.2-.82 2.2-.82.44 1.1.16 1.92.08 2.12.51.56.82 1.27.82 2.15 0 3.07-1.87 3.75-3.65 3.95.29.25.54.73.54 1.48 0 1.07-.01 1.93-.01 2.2 0 .21.15.46.55.38A8.013 8.013 0 0016 8c0-4.42-3.58-8-8-8z"/></svg>
<svg style="left:537px;top:92px" width="17" height="17" viewBox="0 0 17 17" ><rect x="1" y="1" width="15" height="15" rx="2.5" fill="#fff" stroke="#000" stroke-width="1"/><path d="M5 4.5v8M5 4.5l7 8M12 4.5v8" stroke="#000" stroke-width="1.8"/></svg>
<svg style="left:569px;top:92px" width="17" height="17" viewBox="0 0 17 17" ><path d="M11.7 13 8.7 15.2 2.1 8.3 9 1.7 14.1 7.2 9.9 11.2" fill="none" stroke="#2bd98f" stroke-width="2.4" stroke-linejoin="round" stroke-linecap="round"/></svg>
  <div id="page"><div class="pg">
<h1>Bienvenido al Curso de fundamentos de PHP</h1>
<h2>Aprende php y laravel</h2>
<p>Este curso introduce los fundamentos del lenguaje PHP, orientado a quienes inician en el desarrollo web. Aprenderás a instalar y configurar PHP, escribir tus primeros scripts, trabajar con variables, tipos de datos, operadores, estructuras de control (condicionales y bucles) y funciones. También verás cómo procesar formularios HTML, manejar arreglos y trabajar con archivos. Al finalizar, estarás en capacidad de crear páginas web dinámicas simples e interactuar con bases de datos MySQL de forma básica.</p>
<p>Este curso cuesta: 80000</p>
<p>Fecha de publicación: 15-09-2025</p>
<p>Este curso está archivado.</p>
<p>Nivel del curso: básico</p>
<p>Este curso es para principiantes.</p>
<p>Etiquetas del curso:</p>
<ul><li>PHP</li><li>JavaScript</li><li>HTML</li><li>CSS</li><li>MySQL</li></ul>
<p>Cursos relacionados:</p>
<ul><li>PHP</li><li>JavaScript</li><li>HTML</li><li>CSS</li><li>MySQL</li></ul>
<p>Lecciones del curso:</p>
<section>
<li><b>Clase 1. </b>Introducción a PHP - duración: 15:30</li>
<li><b>Clase 2. </b>Variables y Tipos de Datos - duración: 20:45</li>
<li><b>Clase 3. </b>Estructuras de Control - duración: 25:10</li>
<li><b>Clase 4. </b>Funciones en PHP - duración: 30:00</li>
<li><b>Clase 5. </b>Manejo de Formularios - duración: 22:15</li>
<li><b>Clase 6. </b>Trabajando con Arreglos - duración: 18:40</li>
<li><b>Clase 7. </b>Manejo de Archivos - duración: 27:50</li>
<li><b>Clase 8. </b>Introducción a MySQL - duración: 35:20</li>
</section>
  </div>
<svg style="left:600px;top:780px" width="120" height="130" viewBox="0 0 120 130" ><path d="M82.6 92.3 63 110.3 22.6 65 63 21.6 95.6 53.2 74.7 76.7" fill="none" stroke="#f2f6ec" stroke-width="17" stroke-linejoin="round" stroke-linecap="butt"/></svg>
<div class="a" style="left:718.5px;top:796px;font-family:Liberation Sans;font-size:88px;line-height:100px;color:#ebebeb;-webkit-text-stroke:2px #ebebeb;letter-spacing:.7px">Platzi</div>
  </div>
</div>
<div class="a" style="left:0;top:0;width:1914px;height:1px;background:#6e6e6e"></div>
<div class="a" style="left:0;top:0;width:1px;height:1031px;background:#6e6e6e"></div>
<div class="a" style="left:959px;top:0;width:2px;height:1031px;background:#6e6e6e"></div>
</body></html>
